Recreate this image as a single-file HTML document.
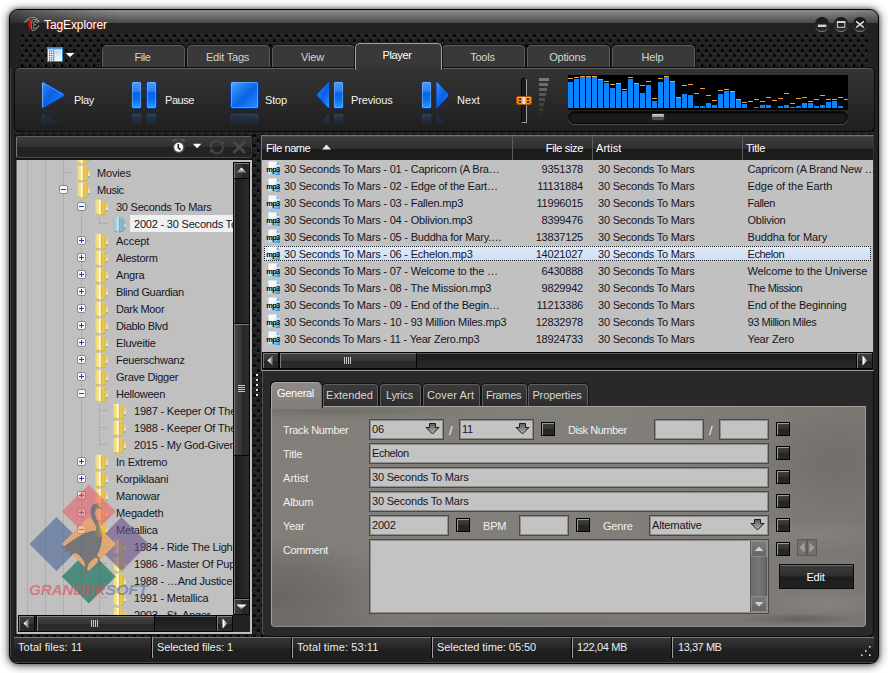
<!DOCTYPE html><html><head><meta charset="utf-8"><title>TagExplorer</title><style>
*{box-sizing:border-box;margin:0;padding:0}
html,body{width:888px;height:673px;overflow:hidden;background:#fff}
body{position:relative;font-family:"Liberation Sans","DejaVu Sans",sans-serif;font-size:11px;letter-spacing:-0.2px;color:#e6e6e6}
.a{position:absolute}
.t{position:absolute;white-space:nowrap;line-height:13px;height:13px}
.win{left:9px;top:9px;width:870px;height:655px;border-radius:9px;background:#000;box-shadow:0 1px 10px 1px rgba(0,0,0,.55),0 0 4px rgba(0,0,0,.45)}
.winin{left:1px;top:1px;right:1px;bottom:1px;border-radius:8px;background-color:#222;overflow:hidden;
 background-image:radial-gradient(circle at 2.3px 1.6px,#000 0,#000 1px,rgba(0,0,0,0) 1.8px),radial-gradient(circle at 6.3px 6.6px,#000 0,#000 1px,rgba(0,0,0,0) 1.8px),radial-gradient(circle at 2.3px 4px,rgba(255,255,255,.08) 0,rgba(255,255,255,.08) .5px,rgba(255,255,255,0) 1.3px),radial-gradient(circle at 6.3px 9px,rgba(255,255,255,.08) 0,rgba(255,255,255,.08) .5px,rgba(255,255,255,0) 1.3px);background-size:8px 10px;background-position:2px 4px}
.dk{color:#15151f}
.tab{position:absolute;top:35px;height:24px;width:83px;border:1px solid #5c5c5c;border-bottom:none;border-radius:5px 5px 0 0;background:#393939;text-align:center;line-height:22px;color:#d6d6d0;box-shadow:0 0 0 1px #111;padding-right:2px}
.tab.sel{top:33px;height:27px;width:87px;background:linear-gradient(#393939 0,#383838 80%,#313131 100%);border-color:#a4a49e;color:#fff;line-height:22px;z-index:3;box-shadow:-1px 0 0 #111,1px 0 0 #111;padding-right:3px}
.tbl{font-size:11px;color:#f2f2f2}
.hdr{position:absolute;top:126px;height:24px;background:linear-gradient(#3d3d3d 0,#2e2e2e 54%,#1b1b1b 54%,#1e1e1e 100%);border-left:1px solid #5c5c5c;border-top:1px solid #4a4a4a;line-height:23px;color:#fff;padding-left:3px;white-space:nowrap}
.row{position:absolute;left:253px;width:609px;height:17px;line-height:17px;color:#15151f;white-space:nowrap}
.row>span{position:absolute;top:1px}
.fld{position:absolute;height:21px;border:1px solid #4c4a48;background:#c3c3c3;box-shadow:inset 0 0 0 1px #908e8b;color:#15151f;line-height:19px;padding-left:2px;white-space:nowrap}
.lbl{position:absolute;color:#f0f0f0;white-space:nowrap;line-height:13px}
.cb{position:absolute;width:14px;height:14px;border:1px solid #000;background:linear-gradient(#3e3e3e 0,#343434 50%,#262626 50%,#282828 100%);box-shadow:inset 1px 1px 0 #9c9c9c}
.tt{position:absolute;letter-spacing:0;padding-right:2px;top:374px;height:22px;border:1px solid #5e5e5e;border-bottom:none;border-radius:4px 4px 0 0;background:linear-gradient(#3b3b3b,#2c2c2c);color:#d8d8d8;text-align:center;line-height:21px;box-shadow:0 0 0 1px #111;white-space:nowrap}
.sb{position:absolute;color:#ececec;line-height:13px;white-space:nowrap;top:631px}
.sd{position:absolute;top:627px;width:2px;height:21px;background:linear-gradient(90deg,#050505 50%,#9c9c9c 50%)}
.tr{position:absolute;left:0;height:17px;line-height:17px;color:#15151f;white-space:nowrap}
</style></head><body>
<div class="a win"><div class="a winin">
<div class="a" style="left:0px;top:0px;width:868px;height:23px;background:linear-gradient(90deg,rgba(20,20,20,.55) 0,rgba(20,20,20,.35) 30px,rgba(20,20,20,0) 110px,rgba(20,20,20,0) 820px,rgba(20,20,20,.12) 868px),linear-gradient(#8e8e8e 0,#4a4a4a 13px,#212121 13px,#212121 100%)"></div>
<div class="a" style="left:0px;top:13px;width:868px;height:10px;background:#212121"></div>
<div class="a" style="left:0px;top:23px;width:5px;height:640px;background:linear-gradient(90deg,#474747 0,#474747 1px,#222 1px)"></div>
<div class="a" style="left:864px;top:23px;width:5px;height:640px;background:#212121"></div>
<div class="a" style="left:858px;top:23px;width:6px;height:35px;background:#222"></div>
<div class="a" style="left:0px;top:23px;width:9px;height:35px;background:#222"></div>
<svg class="a" style="left:13px;top:5px" width="18" height="18" viewBox="23 15 18 18"><path d="M24.800 22.300 C27 17.500 35.500 14.500 39.200 21.800 C35.500 17.800 29.500 18 24.800 22.300Z" fill="#050505" stroke="#c8c8c8" stroke-width=".7"/><path d="M31 18.500 C27.500 21 27.500 28.500 31.500 31 C30 27.500 30.500 22 33 19Z" fill="#ee1212" stroke="#600" stroke-width=".4"/><path d="M33 19.300 C31 22 30.800 27.500 32.300 30.800 C35 30.500 37.500 28.500 39 25.500 C37 27.800 35 28.800 33.600 28.800 L33.300 25.500 L36 24.500 L33.300 24 L33.800 21.300 C35 21.200 36.500 21.800 37.500 23 C36.800 20.800 35 19.300 33 19.300Z" fill="#1a1a1a" stroke="#bdbdbd" stroke-width=".6"/></svg>
<div class="t " style="left:34px;top:7px;font-size:12px;line-height:16px;height:16px;color:#fff;letter-spacing:-0.1px;text-shadow:0 0 3px rgba(200,40,20,.9)">TagExplorer</div>
<svg class="a" style="left:804px;top:6px" width="16" height="17" viewBox="0 0 16 17"><defs><linearGradient id="wb0" x1="0" y1="0" x2="0" y2="1"><stop offset="0" stop-color="#181818"/><stop offset="1" stop-color="#2a2a2a"/></linearGradient><linearGradient id="wr0" x1="0" y1="0" x2="0" y2="1"><stop offset="0" stop-color="#000" stop-opacity="0"/><stop offset=".55" stop-color="#333" stop-opacity=".3"/><stop offset="1" stop-color="#8a8a8a"/></linearGradient></defs><circle cx="8" cy="8.300" r="7.600" fill="url(#wr0)"/><circle cx="8" cy="8" r="7.100" fill="url(#wb0)"/><rect x="3.900" y="8.600" width="8.400" height="2.400" fill="#d4d4d4"/></svg>
<svg class="a" style="left:823px;top:6px" width="16" height="17" viewBox="0 0 16 17"><defs><linearGradient id="wb1" x1="0" y1="0" x2="0" y2="1"><stop offset="0" stop-color="#181818"/><stop offset="1" stop-color="#2a2a2a"/></linearGradient><linearGradient id="wr1" x1="0" y1="0" x2="0" y2="1"><stop offset="0" stop-color="#000" stop-opacity="0"/><stop offset=".55" stop-color="#333" stop-opacity=".3"/><stop offset="1" stop-color="#8a8a8a"/></linearGradient></defs><circle cx="8" cy="8.300" r="7.600" fill="url(#wr1)"/><circle cx="8" cy="8" r="7.100" fill="url(#wb1)"/><rect x="4.400" y="5.500" width="7.400" height="5.800" fill="none" stroke="#d4d4d4" stroke-width="1"/><rect x="3.900" y="5" width="8.400" height="2" fill="#d4d4d4"/></svg>
<svg class="a" style="left:842px;top:6px" width="16" height="17" viewBox="0 0 16 17"><defs><linearGradient id="wb2" x1="0" y1="0" x2="0" y2="1"><stop offset="0" stop-color="#181818"/><stop offset="1" stop-color="#2a2a2a"/></linearGradient><linearGradient id="wr2" x1="0" y1="0" x2="0" y2="1"><stop offset="0" stop-color="#000" stop-opacity="0"/><stop offset=".55" stop-color="#333" stop-opacity=".3"/><stop offset="1" stop-color="#8a8a8a"/></linearGradient></defs><circle cx="8" cy="8.300" r="7.600" fill="url(#wr2)"/><circle cx="8" cy="8" r="7.100" fill="url(#wb2)"/><path d="M4.200 5.300 L11.800 11.500 M11.800 5.300 L4.200 11.500" stroke="#e4e4e4" stroke-width="1.500"/></svg>
<svg class="a" style="left:37px;top:37px" width="30" height="16" viewBox="0 0 30 16"><defs><linearGradient id="mi" x1="0" y1="0" x2="0" y2="1"><stop offset="0" stop-color="#d0d4da"/><stop offset="1" stop-color="#fafbfd"/></linearGradient></defs><rect x=".5" y=".5" width="15" height="14" fill="#fbfcfe" stroke="#2b8ad6"/><rect x="1" y="1" width="14" height="1.500" fill="#4aa0e6"/><rect x="6.300" y="2.500" width="1" height="11.500" fill="#2b8ad6"/><rect x="8" y="3.500" width="6.500" height="10" fill="url(#mi)"/><rect x="2" y="3.5" width="1.300" height="1.300" fill="#1c50c0"/><rect x="4" y="3.5" width="1.500" height="1.300" fill="#777"/><rect x="2" y="5.7" width="1.300" height="1.300" fill="#1c50c0"/><rect x="4" y="5.7" width="1.500" height="1.300" fill="#777"/><rect x="2" y="7.9" width="1.300" height="1.300" fill="#1c50c0"/><rect x="4" y="7.9" width="1.500" height="1.300" fill="#777"/><rect x="2" y="10.1" width="1.300" height="1.300" fill="#1c50c0"/><rect x="4" y="10.1" width="1.500" height="1.300" fill="#777"/><rect x="2" y="12.3" width="1.300" height="1.300" fill="#1c50c0"/><rect x="4" y="12.3" width="1.500" height="1.300" fill="#777"/><path d="M18.800 6 L27.300 6 L23 10.200Z" fill="#fff"/></svg>
<div class="tab" style="left:92px"><span style="letter-spacing:-0.45px">File</span></div>
<div class="tab" style="left:177px">Edit Tags</div>
<div class="tab" style="left:262px">View</div>
<div class="tab sel" style="left:345px"><span style="letter-spacing:-0.36px">Player</span></div>
<div class="tab" style="left:432px">Tools</div>
<div class="tab" style="left:517px">Options</div>
<div class="tab" style="left:602px">Help</div>
<div class="a" style="left:4px;top:57px;width:861px;height:65px;border-radius:6px;background:#0a0a0a"></div>
<div class="a" style="left:5px;top:58px;width:859px;height:63px;border-radius:5px;background:linear-gradient(#343434 0,#2c2c2c 40%,#1f1f1f 100%);border-top:1px solid #5e5e5e"></div>
<svg class="a" style="left:31px;top:71px" width="440" height="47" viewBox="0 0 440 47"><defs>
<linearGradient id="gl" x1="0" y1="0" x2="0" y2="1"><stop offset="0" stop-color="#4f9ff6"/><stop offset=".36" stop-color="#2a80f2"/><stop offset=".42" stop-color="#0b62e4"/><stop offset=".7" stop-color="#0f70ee"/><stop offset="1" stop-color="#33a0ff"/></linearGradient>
<linearGradient id="tri" x1="0" y1="0" x2="1" y2="1"><stop offset="0" stop-color="#4a9ef8"/><stop offset=".3" stop-color="#1a74ee"/><stop offset=".55" stop-color="#0b60e2"/><stop offset="1" stop-color="#2f96ff"/></linearGradient>
<linearGradient id="trr" x1="0" y1="0" x2="1" y2=".8"><stop offset="0" stop-color="#4a9ef8"/><stop offset=".22" stop-color="#1c76ee"/><stop offset=".5" stop-color="#0b60e2"/><stop offset=".8" stop-color="#1878f0"/><stop offset="1" stop-color="#349cff"/></linearGradient>
<linearGradient id="sq" x1="0" y1="0" x2="1" y2="1"><stop offset="0" stop-color="#56acff"/><stop offset=".3" stop-color="#2380f2"/><stop offset=".55" stop-color="#0b64e6"/><stop offset="1" stop-color="#2a90ff"/></linearGradient>
<linearGradient id="fade" x1="0" y1="0" x2="0" y2="1"><stop offset="0" stop-color="#fff" stop-opacity=".27"/><stop offset="1" stop-color="#fff" stop-opacity="0"/></linearGradient>
<mask id="mk"><rect x="0" y="32" width="440" height="13" fill="url(#fade)"/></mask>
</defs><g id="ic"><path d="M2.500 1 Q.5 0 .5 2.500 L.5 25.500 Q.5 28 2.500 27 L22.800 15.300 Q24.200 14 22.800 12.700Z" fill="url(#trr)" stroke="#07349c"/><path d="M2.500 2.300 Q1.600 1.800 1.600 3 L1.600 25 Q1.600 26.200 2.500 25.700" fill="none" stroke="#9cd0ff" stroke-opacity=".6"/><path d="M2.500 2.200 L21.500 13" fill="none" stroke="#9cd0ff" stroke-opacity=".45"/><rect x="90.5" y=".5" width="10" height="27" rx="2" fill="url(#gl)" stroke="#07349c"/><rect x="91.5" y="1.5" width="8" height="25" rx="1.5" fill="none" stroke="#8cc8ff" stroke-opacity=".45"/><rect x="105.5" y=".5" width="10" height="27" rx="2" fill="url(#gl)" stroke="#07349c"/><rect x="106.5" y="1.5" width="8" height="25" rx="1.5" fill="none" stroke="#8cc8ff" stroke-opacity=".45"/><rect x="189.500" y=".5" width="28" height="27" rx="2" fill="url(#sq)" stroke="#07349c"/><rect x="190.500" y="1.500" width="26" height="25" rx="1.500" fill="none" stroke="#8cc8ff" stroke-opacity=".5"/><path d="M287 1 Q288.500 0 288.500 2.500 L288.500 25.500 Q288.500 28 287 27 L276.200 15.300 Q275 14 276.200 12.700Z" fill="url(#tri)" stroke="#07349c"/><rect x="292.5" y=".5" width="10" height="27" rx="2" fill="url(#gl)" stroke="#07349c"/><rect x="293.5" y="1.5" width="8" height="25" rx="1.5" fill="none" stroke="#8cc8ff" stroke-opacity=".45"/><rect x="380.5" y=".5" width="10" height="27" rx="2" fill="url(#gl)" stroke="#07349c"/><rect x="381.5" y="1.5" width="8" height="25" rx="1.5" fill="none" stroke="#8cc8ff" stroke-opacity=".45"/><path d="M396.500 1 Q395 0 395 2.500 L395 25.500 Q395 28 396.500 27 L407.300 15.300 Q408.500 14 407.300 12.700Z" fill="url(#tri)" stroke="#07349c"/></g><g mask="url(#mk)"><g transform="translate(0,60) scale(1,-1)"><path d="M2.500 1 Q.5 0 .5 2.500 L.5 25.500 Q.5 28 2.500 27 L22.800 15.300 Q24.200 14 22.800 12.700Z" fill="url(#trr)" stroke="#07349c"/><path d="M2.500 2.300 Q1.600 1.800 1.600 3 L1.600 25 Q1.600 26.200 2.500 25.700" fill="none" stroke="#9cd0ff" stroke-opacity=".6"/><path d="M2.500 2.200 L21.500 13" fill="none" stroke="#9cd0ff" stroke-opacity=".45"/><rect x="90.5" y=".5" width="10" height="27" rx="2" fill="url(#gl)" stroke="#07349c"/><rect x="91.5" y="1.5" width="8" height="25" rx="1.5" fill="none" stroke="#8cc8ff" stroke-opacity=".45"/><rect x="105.5" y=".5" width="10" height="27" rx="2" fill="url(#gl)" stroke="#07349c"/><rect x="106.5" y="1.5" width="8" height="25" rx="1.5" fill="none" stroke="#8cc8ff" stroke-opacity=".45"/><rect x="189.500" y=".5" width="28" height="27" rx="2" fill="url(#sq)" stroke="#07349c"/><rect x="190.500" y="1.500" width="26" height="25" rx="1.500" fill="none" stroke="#8cc8ff" stroke-opacity=".5"/><path d="M287 1 Q288.500 0 288.500 2.500 L288.500 25.500 Q288.500 28 287 27 L276.200 15.300 Q275 14 276.200 12.700Z" fill="url(#tri)" stroke="#07349c"/><rect x="292.5" y=".5" width="10" height="27" rx="2" fill="url(#gl)" stroke="#07349c"/><rect x="293.5" y="1.5" width="8" height="25" rx="1.5" fill="none" stroke="#8cc8ff" stroke-opacity=".45"/><rect x="380.5" y=".5" width="10" height="27" rx="2" fill="url(#gl)" stroke="#07349c"/><rect x="381.5" y="1.5" width="8" height="25" rx="1.5" fill="none" stroke="#8cc8ff" stroke-opacity=".45"/><path d="M396.500 1 Q395 0 395 2.500 L395 25.500 Q395 28 396.500 27 L407.300 15.300 Q408.500 14 407.300 12.700Z" fill="url(#tri)" stroke="#07349c"/></g></g></svg>
<div class="t tbl" style="left:64px;top:84px;"><span style="letter-spacing:-0.38px">Play</span></div>
<div class="t tbl" style="left:155px;top:84px;"><span style="letter-spacing:-0.44px">Pause</span></div>
<div class="t tbl" style="left:255px;top:84px;"><span style="letter-spacing:-0.21px">Stop</span></div>
<div class="t tbl" style="left:341px;top:84px;"><span style="letter-spacing:-0.16px">Previous</span></div>
<div class="t tbl" style="left:447px;top:84px;"><span style="letter-spacing:0.09px">Next</span></div>
<div class="a" style="left:511px;top:68px;width:6px;height:45px;border-radius:3px 3px 1px 1px;background:#1b1b1b;border:1px solid #080808;border-right-color:#9c9c9c;border-bottom-color:#9c9c9c"></div>
<div class="a" style="left:506px;top:86px;width:16px;height:9px;border-radius:2px;background:linear-gradient(90deg,#e87808 0,#f89020 30%,#f08010 36%,#b8b8b8 38%,#f6f6f6 50%,#a8a8a8 62%,#f08010 64%,#f89020 70%,#e87808 100%);border:1px solid #a85400;box-shadow:inset 0 1px 0 rgba(255,200,120,.7)"><div class="a" style="left:2px;top:1px;width:2px;height:2px;background:#5a2c00"></div><div class="a" style="left:2px;top:4px;width:2px;height:2px;background:#5a2c00"></div><div class="a" style="left:10px;top:1px;width:2px;height:2px;background:#5a2c00"></div><div class="a" style="left:10px;top:4px;width:2px;height:2px;background:#5a2c00"></div></div>
<div class="a" style="left:529px;top:68px;width:10px;height:3px;background:rgb(120,120,120)"></div>
<div class="a" style="left:529px;top:73px;width:9px;height:3px;background:rgb(109,109,109)"></div>
<div class="a" style="left:529px;top:78px;width:8px;height:3px;background:rgb(99,99,99)"></div>
<div class="a" style="left:529px;top:83px;width:7px;height:3px;background:rgb(88,88,88)"></div>
<div class="a" style="left:529px;top:88px;width:6px;height:3px;background:rgb(78,78,78)"></div>
<div class="a" style="left:529px;top:93px;width:5px;height:3px;background:rgb(67,67,67)"></div>
<div class="a" style="left:529px;top:98px;width:4px;height:3px;background:rgb(57,57,57)"></div>
<div class="a" style="left:529px;top:103px;width:3px;height:3px;background:rgb(46,46,46)"></div>
<div class="a" style="left:529px;top:108px;width:2px;height:3px;background:rgb(36,36,36)"></div>
<svg class="a" style="left:558px;top:65px" width="280" height="35" viewBox="0 0 280 35"><rect width="280" height="35" fill="#000"/><rect x="0" y="7" width="5" height="26" fill="#0a84ff"/><rect x="0" y="3" width="5" height="1" fill="#f0a040"/><rect x="6" y="4" width="5" height="29" fill="#0a84ff"/><rect x="6" y="2" width="5" height="1" fill="#f0a040"/><rect x="12" y="2" width="5" height="31" fill="#0a84ff"/><rect x="12" y="1" width="5" height="1" fill="#f0a040"/><rect x="18" y="2" width="5" height="31" fill="#0a84ff"/><rect x="18" y="1" width="5" height="1" fill="#f0a040"/><rect x="24" y="2" width="5" height="31" fill="#0a84ff"/><rect x="24" y="1" width="5" height="1" fill="#f0a040"/><rect x="30" y="5" width="5" height="28" fill="#0a84ff"/><rect x="30" y="4" width="5" height="1" fill="#f0a040"/><rect x="36" y="8" width="5" height="25" fill="#0a84ff"/><rect x="36" y="6" width="5" height="1" fill="#f0a040"/><rect x="42" y="13" width="5" height="20" fill="#0a84ff"/><rect x="42" y="9" width="5" height="1" fill="#f0a040"/><rect x="48" y="9" width="5" height="24" fill="#0a84ff"/><rect x="48" y="8" width="5" height="1" fill="#f0a040"/><rect x="54" y="16" width="5" height="17" fill="#0a84ff"/><rect x="54" y="14" width="5" height="1" fill="#f0a040"/><rect x="60" y="4" width="5" height="29" fill="#0a84ff"/><rect x="60" y="2" width="5" height="1" fill="#f0a040"/><rect x="66" y="9" width="5" height="24" fill="#0a84ff"/><rect x="66" y="8" width="5" height="1" fill="#f0a040"/><rect x="72" y="18" width="5" height="15" fill="#0a84ff"/><rect x="72" y="10" width="5" height="1" fill="#f0a040"/><rect x="78" y="10" width="5" height="23" fill="#0a84ff"/><rect x="78" y="6" width="5" height="1" fill="#f0a040"/><rect x="84" y="26" width="5" height="7" fill="#0a84ff"/><rect x="84" y="23" width="5" height="1" fill="#f0a040"/><rect x="90" y="7" width="5" height="26" fill="#0a84ff"/><rect x="90" y="3" width="5" height="1" fill="#f0a040"/><rect x="96" y="2" width="5" height="31" fill="#0a84ff"/><rect x="96" y="1" width="5" height="1" fill="#f0a040"/><rect x="102" y="7" width="5" height="26" fill="#0a84ff"/><rect x="102" y="6" width="5" height="1" fill="#f0a040"/><rect x="108" y="23" width="5" height="10" fill="#0a84ff"/><rect x="108" y="22" width="5" height="1" fill="#f0a040"/><rect x="114" y="19" width="5" height="14" fill="#0a84ff"/><rect x="114" y="10" width="5" height="1" fill="#f0a040"/><rect x="120" y="20" width="5" height="13" fill="#0a84ff"/><rect x="120" y="9" width="5" height="1" fill="#f0a040"/><rect x="126" y="31" width="5" height="2" fill="#0a84ff"/><rect x="126" y="18" width="5" height="1" fill="#f0a040"/><rect x="132" y="31" width="5" height="2" fill="#0a84ff"/><rect x="132" y="13" width="5" height="1" fill="#f0a040"/><rect x="138" y="28" width="5" height="5" fill="#0a84ff"/><rect x="138" y="20" width="5" height="1" fill="#f0a040"/><rect x="144" y="30" width="5" height="3" fill="#0a84ff"/><rect x="144" y="25" width="5" height="1" fill="#f0a040"/><rect x="150" y="19" width="5" height="14" fill="#0a84ff"/><rect x="150" y="15" width="5" height="1" fill="#f0a040"/><rect x="156" y="16" width="5" height="17" fill="#0a84ff"/><rect x="156" y="14" width="5" height="1" fill="#f0a040"/><rect x="162" y="17" width="5" height="16" fill="#0a84ff"/><rect x="162" y="16" width="5" height="1" fill="#f0a040"/><rect x="168" y="25" width="5" height="8" fill="#0a84ff"/><rect x="168" y="24" width="5" height="1" fill="#f0a040"/><rect x="174" y="29" width="5" height="4" fill="#0a84ff"/><rect x="174" y="27" width="5" height="1" fill="#f0a040"/><rect x="180" y="26" width="5" height="1" fill="#f0a040"/><rect x="186" y="32" width="5" height="1" fill="#0a84ff"/><rect x="186" y="24" width="5" height="1" fill="#f0a040"/><rect x="192" y="30" width="5" height="3" fill="#0a84ff"/><rect x="192" y="26" width="5" height="1" fill="#f0a040"/><rect x="198" y="30" width="5" height="3" fill="#0a84ff"/><rect x="198" y="22" width="5" height="1" fill="#f0a040"/><rect x="204" y="25" width="5" height="1" fill="#f0a040"/><rect x="210" y="31" width="5" height="2" fill="#0a84ff"/><rect x="210" y="23" width="5" height="1" fill="#f0a040"/><rect x="216" y="30" width="5" height="3" fill="#0a84ff"/><rect x="216" y="18" width="5" height="1" fill="#f0a040"/><rect x="222" y="32" width="5" height="1" fill="#0a84ff"/><rect x="222" y="28" width="5" height="1" fill="#f0a040"/><rect x="228" y="31" width="5" height="2" fill="#0a84ff"/><rect x="228" y="23" width="5" height="1" fill="#f0a040"/><rect x="234" y="28" width="5" height="5" fill="#0a84ff"/><rect x="234" y="22" width="5" height="1" fill="#f0a040"/><rect x="240" y="28" width="5" height="5" fill="#0a84ff"/><rect x="240" y="26" width="5" height="1" fill="#f0a040"/><rect x="246" y="31" width="5" height="2" fill="#0a84ff"/><rect x="246" y="24" width="5" height="1" fill="#f0a040"/><rect x="252" y="30" width="5" height="3" fill="#0a84ff"/><rect x="252" y="20" width="5" height="1" fill="#f0a040"/><rect x="258" y="27" width="5" height="6" fill="#0a84ff"/><rect x="258" y="24" width="5" height="1" fill="#f0a040"/><rect x="264" y="26" width="5" height="7" fill="#0a84ff"/><rect x="264" y="24" width="5" height="1" fill="#f0a040"/><rect x="270" y="31" width="5" height="2" fill="#0a84ff"/><rect x="270" y="22" width="5" height="1" fill="#f0a040"/><rect x="276" y="24" width="5" height="1" fill="#f0a040"/></svg>
<div class="a" style="left:558px;top:101px;width:280px;height:13px;border-radius:7px;background:#1b1b1b;border:1px solid #0a0a0a;box-shadow:0 1px 0 #4a4a4a, inset 0 1px 2px #000"></div>
<div class="a" style="left:641px;top:103px;width:14px;height:8px;border-radius:2px;background:linear-gradient(#d8d8d8 0,#9a9a9a 45%,#4a4a4a 55%,#555 100%);border:1px solid #222"></div>
<div class="a" style="left:5px;top:125px;width:238px;height:500px;background:#161616;border-radius:2px"></div>
<div class="a" style="left:6px;top:126px;width:236px;height:22px;background:linear-gradient(#3c3c3c 0,#303030 48%,#222 50%,#242424 100%);border:1px solid #3c3c3c;border-top-color:#5e5e5e;border-left-color:#7a7a7a;border-bottom-color:#4a4a4a;border-radius:2px"></div>
<svg class="a" style="left:160px;top:127px" width="82" height="20" viewBox="0 0 82 20"><path d="M3.300 5.200 A2.300 2.300 0 0 1 6.800 3 M14.200 5.200 A2.300 2.300 0 0 0 10.700 3" stroke="#5a5a5a" stroke-width="1.700" fill="none"/><circle cx="8.700" cy="10.300" r="5.300" fill="#fbfbfb" stroke="#4c4c4c" stroke-width="1.500"/><path d="M8.300 7 V10.800 L10.600 12.600" stroke="#1a1a1a" stroke-width="1.500" fill="none"/><path d="M22.800 6.800 L31.400 6.800 L27.100 11.300Z" fill="#fff"/><path d="M41.200 11.300 A5.900 5.900 0 0 1 51.600 6.200 M52.600 8.700 A5.900 5.900 0 0 1 42.200 13.800" fill="none" stroke="#464646" stroke-width="2"/><path d="M49.300 7.400 L54 8 L53.800 3.300Z M44.500 12.600 L39.800 12 L40 16.700Z" fill="#464646"/><path d="M63.400 4.200 L75.200 16 M75.200 4.200 L63.400 16" stroke="#474747" stroke-width="3"/></svg>
<div class="a" style="left:6px;top:150px;width:236px;height:474px;background:#c0c0c0;border-left:1px solid #6a6a6a"></div>
<div class="a" style="left:7px;top:150px;width:216px;height:455px;background:#c0c0c0;overflow:hidden"><svg width="0" height="0" class="a"><defs><linearGradient id="fgy" x1="0" y1="0" x2="1" y2="0"><stop offset="0" stop-color="#f0d874"/><stop offset=".55" stop-color="#f5e38e"/><stop offset=".7" stop-color="#fffadc"/><stop offset=".85" stop-color="#fffadc"/><stop offset="1" stop-color="#f2dc80"/></linearGradient><linearGradient id="fry" x1="0" y1="0" x2="1" y2="0"><stop offset="0" stop-color="#efd060"/><stop offset="1" stop-color="#e3bb40"/></linearGradient><linearGradient id="fty" x1="0" y1="0" x2="1" y2="0"><stop offset="0" stop-color="#e8c858"/><stop offset="1" stop-color="#f0d878"/></linearGradient><linearGradient id="fsy" x1="0" y1="0" x2="1" y2="0"><stop offset="0" stop-color="#c8a23a"/><stop offset="1" stop-color="#c8a23a"/></linearGradient><linearGradient id="fgb" x1="0" y1="0" x2="1" y2="0"><stop offset="0" stop-color="#98c2d2"/><stop offset=".5" stop-color="#a8cedc"/><stop offset=".78" stop-color="#d4eaf2"/><stop offset="1" stop-color="#a6ccda"/></linearGradient><linearGradient id="frb" x1="0" y1="0" x2="1" y2="0"><stop offset="0" stop-color="#94c0d0"/><stop offset="1" stop-color="#7eaec0"/></linearGradient><linearGradient id="ftb" x1="0" y1="0" x2="1" y2="0"><stop offset="0" stop-color="#86b4c6"/><stop offset="1" stop-color="#9cc6d6"/></linearGradient><linearGradient id="fsb" x1="0" y1="0" x2="1" y2="0"><stop offset="0" stop-color="#6c9cb0"/><stop offset="1" stop-color="#6c9cb0"/></linearGradient></defs></svg>
<div class="a" style="left:10px;top:0px;width:1px;height:455px;background:repeating-linear-gradient(#9c9c9c 0,#9c9c9c 1px,transparent 1px,transparent 2px)"></div>
<div class="a" style="left:28px;top:0px;width:1px;height:455px;background:repeating-linear-gradient(#9c9c9c 0,#9c9c9c 1px,transparent 1px,transparent 2px)"></div>
<div class="a" style="left:46px;top:0px;width:1px;height:455px;background:repeating-linear-gradient(#9c9c9c 0,#9c9c9c 1px,transparent 1px,transparent 2px)"></div>
<svg class="a" style="left:60px;top:-12px" width="14" height="17" viewBox="0 0 14 17"><path d="M10.400 4.600 L12.800 5.200 L12.800 13.800 L10.400 14.400Z" fill="url(#fty)"/><rect x="11.400" y="8.400" width="1" height="2.600" fill="#fff"/><rect x="11.400" y="11" width="1" height="2.300" fill="#36a2ea"/><path d="M5.500 1.600 L9.300 1.700 Q10.700 1.900 10.700 3.400 L10.700 15 Q10.700 15.900 9.800 16 L5.500 16.300Z" fill="url(#fry)"/><path d="M.4 1.500 Q.4 .7 1.200 .7 L5.300 .8 Q6.200 .8 6.200 1.800 L6.200 15.800 Q6.200 16.600 5.300 16.500 L1.200 15.700 Q.4 15.500 .4 14.800Z" fill="url(#fgy)"/><rect x="5.900" y="1.500" width=".6" height="14.800" fill="url(#fsy)"/><path d="M.6 14.600 L6 15.500 L6 16.500 L1.200 15.700Z M6.500 15.400 L10.600 15 L10.600 15.400 Q10.500 16 9.800 16 L6.500 16.300Z" fill="url(#fsy)" fill-opacity=".7"/></svg>
<div class="a" style="left:64px;top:38px;width:1px;height:417px;background:repeating-linear-gradient(#9c9c9c 0,#9c9c9c 1px,transparent 1px,transparent 2px)"></div>
<div class="a" style="left:82px;top:55px;width:1px;height:9px;background:repeating-linear-gradient(#9c9c9c 0,#9c9c9c 1px,transparent 1px,transparent 2px)"></div>
<div class="a" style="left:82px;top:242px;width:1px;height:43px;background:repeating-linear-gradient(#9c9c9c 0,#9c9c9c 1px,transparent 1px,transparent 2px)"></div>
<div class="a" style="left:82px;top:378px;width:1px;height:77px;background:repeating-linear-gradient(#9c9c9c 0,#9c9c9c 1px,transparent 1px,transparent 2px)"></div>
<div class="a" style="left:47px;top:12px;width:8px;height:1px;background:repeating-linear-gradient(90deg,#9c9c9c 0,#9c9c9c 1px,transparent 1px,transparent 2px)"></div>
<svg class="a" style="left:60px;top:5px" width="14" height="17" viewBox="0 0 14 17"><path d="M10.400 4.600 L12.800 5.200 L12.800 13.800 L10.400 14.400Z" fill="url(#fty)"/><rect x="11.400" y="8.400" width="1" height="2.600" fill="#fff"/><rect x="11.400" y="11" width="1" height="2.300" fill="#36a2ea"/><path d="M5.500 1.600 L9.300 1.700 Q10.700 1.900 10.700 3.400 L10.700 15 Q10.700 15.900 9.800 16 L5.500 16.300Z" fill="url(#fry)"/><path d="M.4 1.500 Q.4 .7 1.200 .7 L5.300 .8 Q6.200 .8 6.200 1.800 L6.200 15.800 Q6.200 16.600 5.300 16.500 L1.200 15.700 Q.4 15.500 .4 14.800Z" fill="url(#fgy)"/><rect x="5.900" y="1.500" width=".6" height="14.800" fill="url(#fsy)"/><path d="M.6 14.600 L6 15.500 L6 16.500 L1.200 15.700Z M6.500 15.400 L10.600 15 L10.600 15.400 Q10.500 16 9.800 16 L6.500 16.300Z" fill="url(#fsy)" fill-opacity=".7"/></svg>
<div class="tr" style="left:80px;top:5px"><span style="letter-spacing:-0.19px">Movies</span></div>
<div class="a" style="left:52px;top:29px;width:3px;height:1px;background:repeating-linear-gradient(90deg,#9c9c9c 0,#9c9c9c 1px,transparent 1px,transparent 2px)"></div>
<svg class="a" style="left:42px;top:25px" width="9" height="9" viewBox="0 0 9 9"><rect x=".5" y=".5" width="8" height="8" rx="1.5" fill="#f6f6f6" stroke="#8a8a8a"/><rect x="2" y="4" width="5" height="1" fill="#23409a"/></svg>
<svg class="a" style="left:60px;top:22px" width="14" height="17" viewBox="0 0 14 17"><path d="M10.400 4.600 L12.800 5.200 L12.800 13.800 L10.400 14.400Z" fill="url(#fty)"/><rect x="11.400" y="8.400" width="1" height="2.600" fill="#fff"/><rect x="11.400" y="11" width="1" height="2.300" fill="#36a2ea"/><path d="M5.500 1.600 L9.300 1.700 Q10.700 1.900 10.700 3.400 L10.700 15 Q10.700 15.900 9.800 16 L5.500 16.300Z" fill="url(#fry)"/><path d="M.4 1.500 Q.4 .7 1.200 .7 L5.300 .8 Q6.200 .8 6.200 1.800 L6.200 15.800 Q6.200 16.600 5.300 16.500 L1.200 15.700 Q.4 15.500 .4 14.800Z" fill="url(#fgy)"/><rect x="5.900" y="1.500" width=".6" height="14.800" fill="url(#fsy)"/><path d="M.6 14.600 L6 15.500 L6 16.500 L1.200 15.700Z M6.500 15.400 L10.600 15 L10.600 15.400 Q10.500 16 9.800 16 L6.500 16.300Z" fill="url(#fsy)" fill-opacity=".7"/></svg>
<div class="tr" style="left:80px;top:22px"><span style="letter-spacing:-0.45px">Music</span></div>
<div class="a" style="left:70px;top:46px;width:3px;height:1px;background:repeating-linear-gradient(90deg,#9c9c9c 0,#9c9c9c 1px,transparent 1px,transparent 2px)"></div>
<svg class="a" style="left:60px;top:42px" width="9" height="9" viewBox="0 0 9 9"><rect x=".5" y=".5" width="8" height="8" rx="1.5" fill="#f6f6f6" stroke="#8a8a8a"/><rect x="2" y="4" width="5" height="1" fill="#23409a"/></svg>
<svg class="a" style="left:78px;top:39px" width="14" height="17" viewBox="0 0 14 17"><path d="M10.400 4.600 L12.800 5.200 L12.800 13.800 L10.400 14.400Z" fill="url(#fty)"/><rect x="11.400" y="8.400" width="1" height="2.600" fill="#fff"/><rect x="11.400" y="11" width="1" height="2.300" fill="#36a2ea"/><path d="M5.500 1.600 L9.300 1.700 Q10.700 1.900 10.700 3.400 L10.700 15 Q10.700 15.900 9.800 16 L5.500 16.300Z" fill="url(#fry)"/><path d="M.4 1.500 Q.4 .7 1.200 .7 L5.300 .8 Q6.200 .8 6.200 1.800 L6.200 15.800 Q6.200 16.600 5.300 16.500 L1.200 15.700 Q.4 15.500 .4 14.800Z" fill="url(#fgy)"/><rect x="5.900" y="1.500" width=".6" height="14.800" fill="url(#fsy)"/><path d="M.6 14.600 L6 15.500 L6 16.500 L1.200 15.700Z M6.500 15.400 L10.600 15 L10.600 15.400 Q10.500 16 9.800 16 L6.500 16.300Z" fill="url(#fsy)" fill-opacity=".7"/></svg>
<div class="tr" style="left:99px;top:39px"><span style="letter-spacing:-0.25px">30 Seconds To Mars</span></div>
<div class="a" style="left:83px;top:63px;width:8px;height:1px;background:repeating-linear-gradient(90deg,#9c9c9c 0,#9c9c9c 1px,transparent 1px,transparent 2px)"></div>
<svg class="a" style="left:96px;top:56px" width="14" height="17" viewBox="0 0 14 17"><path d="M10.400 4.600 L12.800 5.200 L12.800 13.800 L10.400 14.400Z" fill="url(#ftb)"/><rect x="11.400" y="8.400" width="1" height="2.600" fill="#fff"/><rect x="11.400" y="11" width="1" height="2.300" fill="#36a2ea"/><path d="M5.500 1.600 L9.300 1.700 Q10.700 1.900 10.700 3.400 L10.700 15 Q10.700 15.900 9.800 16 L5.500 16.300Z" fill="url(#frb)"/><path d="M.4 1.500 Q.4 .7 1.200 .7 L5.300 .8 Q6.200 .8 6.200 1.800 L6.200 15.800 Q6.200 16.600 5.300 16.500 L1.200 15.700 Q.4 15.500 .4 14.800Z" fill="url(#fgb)"/><rect x="5.900" y="1.500" width=".6" height="14.800" fill="url(#fsb)"/><path d="M.6 14.600 L6 15.500 L6 16.500 L1.200 15.700Z M6.500 15.400 L10.600 15 L10.600 15.400 Q10.500 16 9.800 16 L6.500 16.300Z" fill="url(#fsb)" fill-opacity=".7"/></svg>
<div class="a" style="left:113px;top:55px;width:200px;height:17px;background:#f0f0f0"></div>
<div class="tr" style="left:117px;top:56px">2002 - 30 Seconds To Mars - 30 Seconds To Mars</div>
<div class="a" style="left:70px;top:80px;width:3px;height:1px;background:repeating-linear-gradient(90deg,#9c9c9c 0,#9c9c9c 1px,transparent 1px,transparent 2px)"></div>
<svg class="a" style="left:60px;top:76px" width="9" height="9" viewBox="0 0 9 9"><rect x=".5" y=".5" width="8" height="8" rx="1.5" fill="#f6f6f6" stroke="#8a8a8a"/><rect x="2" y="4" width="5" height="1" fill="#23409a"/><rect x="4" y="2" width="1" height="5" fill="#23409a"/></svg>
<svg class="a" style="left:78px;top:73px" width="14" height="17" viewBox="0 0 14 17"><path d="M10.400 4.600 L12.800 5.200 L12.800 13.800 L10.400 14.400Z" fill="url(#fty)"/><rect x="11.400" y="8.400" width="1" height="2.600" fill="#fff"/><rect x="11.400" y="11" width="1" height="2.300" fill="#36a2ea"/><path d="M5.500 1.600 L9.300 1.700 Q10.700 1.900 10.700 3.400 L10.700 15 Q10.700 15.900 9.800 16 L5.500 16.300Z" fill="url(#fry)"/><path d="M.4 1.500 Q.4 .7 1.200 .7 L5.300 .8 Q6.200 .8 6.200 1.800 L6.200 15.800 Q6.200 16.600 5.300 16.500 L1.200 15.700 Q.4 15.500 .4 14.800Z" fill="url(#fgy)"/><rect x="5.900" y="1.500" width=".6" height="14.800" fill="url(#fsy)"/><path d="M.6 14.600 L6 15.500 L6 16.500 L1.200 15.700Z M6.500 15.400 L10.600 15 L10.600 15.400 Q10.500 16 9.800 16 L6.500 16.300Z" fill="url(#fsy)" fill-opacity=".7"/></svg>
<div class="tr" style="left:99px;top:73px"><span style="letter-spacing:-0.06px">Accept</span></div>
<div class="a" style="left:70px;top:97px;width:3px;height:1px;background:repeating-linear-gradient(90deg,#9c9c9c 0,#9c9c9c 1px,transparent 1px,transparent 2px)"></div>
<svg class="a" style="left:60px;top:93px" width="9" height="9" viewBox="0 0 9 9"><rect x=".5" y=".5" width="8" height="8" rx="1.5" fill="#f6f6f6" stroke="#8a8a8a"/><rect x="2" y="4" width="5" height="1" fill="#23409a"/><rect x="4" y="2" width="1" height="5" fill="#23409a"/></svg>
<svg class="a" style="left:78px;top:90px" width="14" height="17" viewBox="0 0 14 17"><path d="M10.400 4.600 L12.800 5.200 L12.800 13.800 L10.400 14.400Z" fill="url(#fty)"/><rect x="11.400" y="8.400" width="1" height="2.600" fill="#fff"/><rect x="11.400" y="11" width="1" height="2.300" fill="#36a2ea"/><path d="M5.500 1.600 L9.300 1.700 Q10.700 1.900 10.700 3.400 L10.700 15 Q10.700 15.900 9.800 16 L5.500 16.300Z" fill="url(#fry)"/><path d="M.4 1.500 Q.4 .7 1.200 .7 L5.300 .8 Q6.200 .8 6.200 1.800 L6.200 15.800 Q6.200 16.600 5.300 16.500 L1.200 15.700 Q.4 15.500 .4 14.800Z" fill="url(#fgy)"/><rect x="5.900" y="1.500" width=".6" height="14.800" fill="url(#fsy)"/><path d="M.6 14.600 L6 15.500 L6 16.500 L1.200 15.700Z M6.500 15.400 L10.600 15 L10.600 15.400 Q10.500 16 9.800 16 L6.500 16.300Z" fill="url(#fsy)" fill-opacity=".7"/></svg>
<div class="tr" style="left:99px;top:90px"><span style="letter-spacing:-0.2px">Alestorm</span></div>
<div class="a" style="left:70px;top:114px;width:3px;height:1px;background:repeating-linear-gradient(90deg,#9c9c9c 0,#9c9c9c 1px,transparent 1px,transparent 2px)"></div>
<svg class="a" style="left:60px;top:110px" width="9" height="9" viewBox="0 0 9 9"><rect x=".5" y=".5" width="8" height="8" rx="1.5" fill="#f6f6f6" stroke="#8a8a8a"/><rect x="2" y="4" width="5" height="1" fill="#23409a"/><rect x="4" y="2" width="1" height="5" fill="#23409a"/></svg>
<svg class="a" style="left:78px;top:107px" width="14" height="17" viewBox="0 0 14 17"><path d="M10.400 4.600 L12.800 5.200 L12.800 13.800 L10.400 14.400Z" fill="url(#fty)"/><rect x="11.400" y="8.400" width="1" height="2.600" fill="#fff"/><rect x="11.400" y="11" width="1" height="2.300" fill="#36a2ea"/><path d="M5.500 1.600 L9.300 1.700 Q10.700 1.900 10.700 3.400 L10.700 15 Q10.700 15.900 9.800 16 L5.500 16.300Z" fill="url(#fry)"/><path d="M.4 1.500 Q.4 .7 1.200 .7 L5.300 .8 Q6.200 .8 6.200 1.800 L6.200 15.800 Q6.200 16.600 5.300 16.500 L1.200 15.700 Q.4 15.500 .4 14.800Z" fill="url(#fgy)"/><rect x="5.900" y="1.500" width=".6" height="14.800" fill="url(#fsy)"/><path d="M.6 14.600 L6 15.500 L6 16.500 L1.200 15.700Z M6.500 15.400 L10.600 15 L10.600 15.400 Q10.500 16 9.800 16 L6.500 16.300Z" fill="url(#fsy)" fill-opacity=".7"/></svg>
<div class="tr" style="left:99px;top:107px"><span style="letter-spacing:-0.17px">Angra</span></div>
<div class="a" style="left:70px;top:131px;width:3px;height:1px;background:repeating-linear-gradient(90deg,#9c9c9c 0,#9c9c9c 1px,transparent 1px,transparent 2px)"></div>
<svg class="a" style="left:60px;top:127px" width="9" height="9" viewBox="0 0 9 9"><rect x=".5" y=".5" width="8" height="8" rx="1.5" fill="#f6f6f6" stroke="#8a8a8a"/><rect x="2" y="4" width="5" height="1" fill="#23409a"/><rect x="4" y="2" width="1" height="5" fill="#23409a"/></svg>
<svg class="a" style="left:78px;top:124px" width="14" height="17" viewBox="0 0 14 17"><path d="M10.400 4.600 L12.800 5.200 L12.800 13.800 L10.400 14.400Z" fill="url(#fty)"/><rect x="11.400" y="8.400" width="1" height="2.600" fill="#fff"/><rect x="11.400" y="11" width="1" height="2.300" fill="#36a2ea"/><path d="M5.500 1.600 L9.300 1.700 Q10.700 1.900 10.700 3.400 L10.700 15 Q10.700 15.900 9.800 16 L5.500 16.300Z" fill="url(#fry)"/><path d="M.4 1.500 Q.4 .7 1.200 .7 L5.300 .8 Q6.200 .8 6.200 1.800 L6.200 15.800 Q6.200 16.600 5.300 16.500 L1.200 15.700 Q.4 15.500 .4 14.800Z" fill="url(#fgy)"/><rect x="5.900" y="1.500" width=".6" height="14.800" fill="url(#fsy)"/><path d="M.6 14.600 L6 15.500 L6 16.500 L1.200 15.700Z M6.500 15.400 L10.600 15 L10.600 15.400 Q10.500 16 9.800 16 L6.500 16.300Z" fill="url(#fsy)" fill-opacity=".7"/></svg>
<div class="tr" style="left:99px;top:124px"><span style="letter-spacing:-0.35px">Blind Guardian</span></div>
<div class="a" style="left:70px;top:148px;width:3px;height:1px;background:repeating-linear-gradient(90deg,#9c9c9c 0,#9c9c9c 1px,transparent 1px,transparent 2px)"></div>
<svg class="a" style="left:60px;top:144px" width="9" height="9" viewBox="0 0 9 9"><rect x=".5" y=".5" width="8" height="8" rx="1.5" fill="#f6f6f6" stroke="#8a8a8a"/><rect x="2" y="4" width="5" height="1" fill="#23409a"/><rect x="4" y="2" width="1" height="5" fill="#23409a"/></svg>
<svg class="a" style="left:78px;top:141px" width="14" height="17" viewBox="0 0 14 17"><path d="M10.400 4.600 L12.800 5.200 L12.800 13.800 L10.400 14.400Z" fill="url(#fty)"/><rect x="11.400" y="8.400" width="1" height="2.600" fill="#fff"/><rect x="11.400" y="11" width="1" height="2.300" fill="#36a2ea"/><path d="M5.500 1.600 L9.300 1.700 Q10.700 1.900 10.700 3.400 L10.700 15 Q10.700 15.900 9.800 16 L5.500 16.300Z" fill="url(#fry)"/><path d="M.4 1.500 Q.4 .7 1.200 .7 L5.300 .8 Q6.200 .8 6.200 1.800 L6.200 15.800 Q6.200 16.600 5.300 16.500 L1.200 15.700 Q.4 15.500 .4 14.800Z" fill="url(#fgy)"/><rect x="5.900" y="1.500" width=".6" height="14.800" fill="url(#fsy)"/><path d="M.6 14.600 L6 15.500 L6 16.500 L1.200 15.700Z M6.500 15.400 L10.600 15 L10.600 15.400 Q10.500 16 9.800 16 L6.500 16.300Z" fill="url(#fsy)" fill-opacity=".7"/></svg>
<div class="tr" style="left:99px;top:141px"><span style="letter-spacing:-0.35px">Dark Moor</span></div>
<div class="a" style="left:70px;top:165px;width:3px;height:1px;background:repeating-linear-gradient(90deg,#9c9c9c 0,#9c9c9c 1px,transparent 1px,transparent 2px)"></div>
<svg class="a" style="left:60px;top:161px" width="9" height="9" viewBox="0 0 9 9"><rect x=".5" y=".5" width="8" height="8" rx="1.5" fill="#f6f6f6" stroke="#8a8a8a"/><rect x="2" y="4" width="5" height="1" fill="#23409a"/><rect x="4" y="2" width="1" height="5" fill="#23409a"/></svg>
<svg class="a" style="left:78px;top:158px" width="14" height="17" viewBox="0 0 14 17"><path d="M10.400 4.600 L12.800 5.200 L12.800 13.800 L10.400 14.400Z" fill="url(#fty)"/><rect x="11.400" y="8.400" width="1" height="2.600" fill="#fff"/><rect x="11.400" y="11" width="1" height="2.300" fill="#36a2ea"/><path d="M5.500 1.600 L9.300 1.700 Q10.700 1.900 10.700 3.400 L10.700 15 Q10.700 15.900 9.800 16 L5.500 16.300Z" fill="url(#fry)"/><path d="M.4 1.500 Q.4 .7 1.200 .7 L5.300 .8 Q6.200 .8 6.200 1.800 L6.200 15.800 Q6.200 16.600 5.300 16.500 L1.200 15.700 Q.4 15.500 .4 14.800Z" fill="url(#fgy)"/><rect x="5.900" y="1.500" width=".6" height="14.800" fill="url(#fsy)"/><path d="M.6 14.600 L6 15.500 L6 16.500 L1.200 15.700Z M6.500 15.400 L10.600 15 L10.600 15.400 Q10.500 16 9.800 16 L6.500 16.300Z" fill="url(#fsy)" fill-opacity=".7"/></svg>
<div class="tr" style="left:99px;top:158px"><span style="letter-spacing:-0.35px">Diablo Blvd</span></div>
<div class="a" style="left:70px;top:182px;width:3px;height:1px;background:repeating-linear-gradient(90deg,#9c9c9c 0,#9c9c9c 1px,transparent 1px,transparent 2px)"></div>
<svg class="a" style="left:60px;top:178px" width="9" height="9" viewBox="0 0 9 9"><rect x=".5" y=".5" width="8" height="8" rx="1.5" fill="#f6f6f6" stroke="#8a8a8a"/><rect x="2" y="4" width="5" height="1" fill="#23409a"/><rect x="4" y="2" width="1" height="5" fill="#23409a"/></svg>
<svg class="a" style="left:78px;top:175px" width="14" height="17" viewBox="0 0 14 17"><path d="M10.400 4.600 L12.800 5.200 L12.800 13.800 L10.400 14.400Z" fill="url(#fty)"/><rect x="11.400" y="8.400" width="1" height="2.600" fill="#fff"/><rect x="11.400" y="11" width="1" height="2.300" fill="#36a2ea"/><path d="M5.500 1.600 L9.300 1.700 Q10.700 1.900 10.700 3.400 L10.700 15 Q10.700 15.900 9.800 16 L5.500 16.300Z" fill="url(#fry)"/><path d="M.4 1.500 Q.4 .7 1.200 .7 L5.300 .8 Q6.200 .8 6.200 1.800 L6.200 15.800 Q6.200 16.600 5.300 16.500 L1.200 15.700 Q.4 15.500 .4 14.800Z" fill="url(#fgy)"/><rect x="5.900" y="1.500" width=".6" height="14.800" fill="url(#fsy)"/><path d="M.6 14.600 L6 15.500 L6 16.500 L1.200 15.700Z M6.500 15.400 L10.600 15 L10.600 15.400 Q10.500 16 9.800 16 L6.500 16.300Z" fill="url(#fsy)" fill-opacity=".7"/></svg>
<div class="tr" style="left:99px;top:175px"><span style="letter-spacing:-0.2px">Eluveitie</span></div>
<div class="a" style="left:70px;top:199px;width:3px;height:1px;background:repeating-linear-gradient(90deg,#9c9c9c 0,#9c9c9c 1px,transparent 1px,transparent 2px)"></div>
<svg class="a" style="left:60px;top:195px" width="9" height="9" viewBox="0 0 9 9"><rect x=".5" y=".5" width="8" height="8" rx="1.5" fill="#f6f6f6" stroke="#8a8a8a"/><rect x="2" y="4" width="5" height="1" fill="#23409a"/><rect x="4" y="2" width="1" height="5" fill="#23409a"/></svg>
<svg class="a" style="left:78px;top:192px" width="14" height="17" viewBox="0 0 14 17"><path d="M10.400 4.600 L12.800 5.200 L12.800 13.800 L10.400 14.400Z" fill="url(#fty)"/><rect x="11.400" y="8.400" width="1" height="2.600" fill="#fff"/><rect x="11.400" y="11" width="1" height="2.300" fill="#36a2ea"/><path d="M5.500 1.600 L9.300 1.700 Q10.700 1.900 10.700 3.400 L10.700 15 Q10.700 15.900 9.800 16 L5.500 16.300Z" fill="url(#fry)"/><path d="M.4 1.500 Q.4 .7 1.200 .7 L5.300 .8 Q6.200 .8 6.200 1.800 L6.200 15.800 Q6.200 16.600 5.300 16.500 L1.200 15.700 Q.4 15.500 .4 14.800Z" fill="url(#fgy)"/><rect x="5.900" y="1.500" width=".6" height="14.800" fill="url(#fsy)"/><path d="M.6 14.600 L6 15.500 L6 16.500 L1.200 15.700Z M6.500 15.400 L10.600 15 L10.600 15.400 Q10.500 16 9.800 16 L6.500 16.300Z" fill="url(#fsy)" fill-opacity=".7"/></svg>
<div class="tr" style="left:99px;top:192px"><span style="letter-spacing:-0.24px">Feuerschwanz</span></div>
<div class="a" style="left:70px;top:216px;width:3px;height:1px;background:repeating-linear-gradient(90deg,#9c9c9c 0,#9c9c9c 1px,transparent 1px,transparent 2px)"></div>
<svg class="a" style="left:60px;top:212px" width="9" height="9" viewBox="0 0 9 9"><rect x=".5" y=".5" width="8" height="8" rx="1.5" fill="#f6f6f6" stroke="#8a8a8a"/><rect x="2" y="4" width="5" height="1" fill="#23409a"/><rect x="4" y="2" width="1" height="5" fill="#23409a"/></svg>
<svg class="a" style="left:78px;top:209px" width="14" height="17" viewBox="0 0 14 17"><path d="M10.400 4.600 L12.800 5.200 L12.800 13.800 L10.400 14.400Z" fill="url(#fty)"/><rect x="11.400" y="8.400" width="1" height="2.600" fill="#fff"/><rect x="11.400" y="11" width="1" height="2.300" fill="#36a2ea"/><path d="M5.500 1.600 L9.300 1.700 Q10.700 1.900 10.700 3.400 L10.700 15 Q10.700 15.900 9.800 16 L5.500 16.300Z" fill="url(#fry)"/><path d="M.4 1.500 Q.4 .7 1.200 .7 L5.300 .8 Q6.200 .8 6.200 1.800 L6.200 15.800 Q6.200 16.600 5.300 16.500 L1.200 15.700 Q.4 15.500 .4 14.800Z" fill="url(#fgy)"/><rect x="5.900" y="1.500" width=".6" height="14.800" fill="url(#fsy)"/><path d="M.6 14.600 L6 15.500 L6 16.500 L1.200 15.700Z M6.500 15.400 L10.600 15 L10.600 15.400 Q10.500 16 9.800 16 L6.500 16.300Z" fill="url(#fsy)" fill-opacity=".7"/></svg>
<div class="tr" style="left:99px;top:209px"><span style="letter-spacing:-0.27px">Grave Digger</span></div>
<div class="a" style="left:70px;top:233px;width:3px;height:1px;background:repeating-linear-gradient(90deg,#9c9c9c 0,#9c9c9c 1px,transparent 1px,transparent 2px)"></div>
<svg class="a" style="left:60px;top:229px" width="9" height="9" viewBox="0 0 9 9"><rect x=".5" y=".5" width="8" height="8" rx="1.5" fill="#f6f6f6" stroke="#8a8a8a"/><rect x="2" y="4" width="5" height="1" fill="#23409a"/></svg>
<svg class="a" style="left:78px;top:226px" width="14" height="17" viewBox="0 0 14 17"><path d="M10.400 4.600 L12.800 5.200 L12.800 13.800 L10.400 14.400Z" fill="url(#fty)"/><rect x="11.400" y="8.400" width="1" height="2.600" fill="#fff"/><rect x="11.400" y="11" width="1" height="2.300" fill="#36a2ea"/><path d="M5.500 1.600 L9.300 1.700 Q10.700 1.900 10.700 3.400 L10.700 15 Q10.700 15.900 9.800 16 L5.500 16.300Z" fill="url(#fry)"/><path d="M.4 1.500 Q.4 .7 1.200 .7 L5.300 .8 Q6.200 .8 6.200 1.800 L6.200 15.800 Q6.200 16.600 5.300 16.500 L1.200 15.700 Q.4 15.500 .4 14.800Z" fill="url(#fgy)"/><rect x="5.900" y="1.500" width=".6" height="14.800" fill="url(#fsy)"/><path d="M.6 14.600 L6 15.500 L6 16.500 L1.200 15.700Z M6.500 15.400 L10.600 15 L10.600 15.400 Q10.500 16 9.800 16 L6.500 16.300Z" fill="url(#fsy)" fill-opacity=".7"/></svg>
<div class="tr" style="left:99px;top:226px"><span style="letter-spacing:-0.26px">Helloween</span></div>
<div class="a" style="left:83px;top:250px;width:8px;height:1px;background:repeating-linear-gradient(90deg,#9c9c9c 0,#9c9c9c 1px,transparent 1px,transparent 2px)"></div>
<svg class="a" style="left:96px;top:243px" width="14" height="17" viewBox="0 0 14 17"><path d="M10.400 4.600 L12.800 5.200 L12.800 13.800 L10.400 14.400Z" fill="url(#fty)"/><rect x="11.400" y="8.400" width="1" height="2.600" fill="#fff"/><rect x="11.400" y="11" width="1" height="2.300" fill="#36a2ea"/><path d="M5.500 1.600 L9.300 1.700 Q10.700 1.900 10.700 3.400 L10.700 15 Q10.700 15.900 9.800 16 L5.500 16.300Z" fill="url(#fry)"/><path d="M.4 1.500 Q.4 .7 1.200 .7 L5.300 .8 Q6.200 .8 6.200 1.800 L6.200 15.800 Q6.200 16.600 5.300 16.500 L1.200 15.700 Q.4 15.500 .4 14.800Z" fill="url(#fgy)"/><rect x="5.900" y="1.500" width=".6" height="14.800" fill="url(#fsy)"/><path d="M.6 14.600 L6 15.500 L6 16.500 L1.200 15.700Z M6.500 15.400 L10.600 15 L10.600 15.400 Q10.500 16 9.800 16 L6.500 16.300Z" fill="url(#fsy)" fill-opacity=".7"/></svg>
<div class="tr" style="left:117px;top:243px">1987 - Keeper Of The Seven Keys Part I</div>
<div class="a" style="left:83px;top:267px;width:8px;height:1px;background:repeating-linear-gradient(90deg,#9c9c9c 0,#9c9c9c 1px,transparent 1px,transparent 2px)"></div>
<svg class="a" style="left:96px;top:260px" width="14" height="17" viewBox="0 0 14 17"><path d="M10.400 4.600 L12.800 5.200 L12.800 13.800 L10.400 14.400Z" fill="url(#fty)"/><rect x="11.400" y="8.400" width="1" height="2.600" fill="#fff"/><rect x="11.400" y="11" width="1" height="2.300" fill="#36a2ea"/><path d="M5.500 1.600 L9.300 1.700 Q10.700 1.900 10.700 3.400 L10.700 15 Q10.700 15.900 9.800 16 L5.500 16.300Z" fill="url(#fry)"/><path d="M.4 1.500 Q.4 .7 1.200 .7 L5.300 .8 Q6.200 .8 6.200 1.800 L6.200 15.800 Q6.200 16.600 5.300 16.500 L1.200 15.700 Q.4 15.500 .4 14.800Z" fill="url(#fgy)"/><rect x="5.900" y="1.500" width=".6" height="14.800" fill="url(#fsy)"/><path d="M.6 14.600 L6 15.500 L6 16.500 L1.200 15.700Z M6.500 15.400 L10.600 15 L10.600 15.400 Q10.500 16 9.800 16 L6.500 16.300Z" fill="url(#fsy)" fill-opacity=".7"/></svg>
<div class="tr" style="left:117px;top:260px">1988 - Keeper Of The Seven Keys Part II</div>
<div class="a" style="left:83px;top:284px;width:8px;height:1px;background:repeating-linear-gradient(90deg,#9c9c9c 0,#9c9c9c 1px,transparent 1px,transparent 2px)"></div>
<svg class="a" style="left:96px;top:277px" width="14" height="17" viewBox="0 0 14 17"><path d="M10.400 4.600 L12.800 5.200 L12.800 13.800 L10.400 14.400Z" fill="url(#fty)"/><rect x="11.400" y="8.400" width="1" height="2.600" fill="#fff"/><rect x="11.400" y="11" width="1" height="2.300" fill="#36a2ea"/><path d="M5.500 1.600 L9.300 1.700 Q10.700 1.900 10.700 3.400 L10.700 15 Q10.700 15.900 9.800 16 L5.500 16.300Z" fill="url(#fry)"/><path d="M.4 1.500 Q.4 .7 1.200 .7 L5.300 .8 Q6.200 .8 6.200 1.800 L6.200 15.800 Q6.200 16.600 5.300 16.500 L1.200 15.700 Q.4 15.500 .4 14.800Z" fill="url(#fgy)"/><rect x="5.900" y="1.500" width=".6" height="14.800" fill="url(#fsy)"/><path d="M.6 14.600 L6 15.500 L6 16.500 L1.200 15.700Z M6.500 15.400 L10.600 15 L10.600 15.400 Q10.500 16 9.800 16 L6.500 16.300Z" fill="url(#fsy)" fill-opacity=".7"/></svg>
<div class="tr" style="left:117px;top:277px">2015 - My God-Given Right</div>
<div class="a" style="left:70px;top:301px;width:3px;height:1px;background:repeating-linear-gradient(90deg,#9c9c9c 0,#9c9c9c 1px,transparent 1px,transparent 2px)"></div>
<svg class="a" style="left:60px;top:297px" width="9" height="9" viewBox="0 0 9 9"><rect x=".5" y=".5" width="8" height="8" rx="1.5" fill="#f6f6f6" stroke="#8a8a8a"/><rect x="2" y="4" width="5" height="1" fill="#23409a"/><rect x="4" y="2" width="1" height="5" fill="#23409a"/></svg>
<svg class="a" style="left:78px;top:294px" width="14" height="17" viewBox="0 0 14 17"><path d="M10.400 4.600 L12.800 5.200 L12.800 13.800 L10.400 14.400Z" fill="url(#fty)"/><rect x="11.400" y="8.400" width="1" height="2.600" fill="#fff"/><rect x="11.400" y="11" width="1" height="2.300" fill="#36a2ea"/><path d="M5.500 1.600 L9.300 1.700 Q10.700 1.900 10.700 3.400 L10.700 15 Q10.700 15.900 9.800 16 L5.500 16.300Z" fill="url(#fry)"/><path d="M.4 1.500 Q.4 .7 1.200 .7 L5.300 .8 Q6.200 .8 6.200 1.800 L6.200 15.800 Q6.200 16.600 5.300 16.500 L1.200 15.700 Q.4 15.500 .4 14.800Z" fill="url(#fgy)"/><rect x="5.900" y="1.500" width=".6" height="14.800" fill="url(#fsy)"/><path d="M.6 14.600 L6 15.500 L6 16.500 L1.200 15.700Z M6.500 15.400 L10.600 15 L10.600 15.400 Q10.500 16 9.800 16 L6.500 16.300Z" fill="url(#fsy)" fill-opacity=".7"/></svg>
<div class="tr" style="left:99px;top:294px">In Extremo</div>
<div class="a" style="left:70px;top:318px;width:3px;height:1px;background:repeating-linear-gradient(90deg,#9c9c9c 0,#9c9c9c 1px,transparent 1px,transparent 2px)"></div>
<svg class="a" style="left:60px;top:314px" width="9" height="9" viewBox="0 0 9 9"><rect x=".5" y=".5" width="8" height="8" rx="1.5" fill="#f6f6f6" stroke="#8a8a8a"/><rect x="2" y="4" width="5" height="1" fill="#23409a"/><rect x="4" y="2" width="1" height="5" fill="#23409a"/></svg>
<svg class="a" style="left:78px;top:311px" width="14" height="17" viewBox="0 0 14 17"><path d="M10.400 4.600 L12.800 5.200 L12.800 13.800 L10.400 14.400Z" fill="url(#fty)"/><rect x="11.400" y="8.400" width="1" height="2.600" fill="#fff"/><rect x="11.400" y="11" width="1" height="2.300" fill="#36a2ea"/><path d="M5.500 1.600 L9.300 1.700 Q10.700 1.900 10.700 3.400 L10.700 15 Q10.700 15.900 9.800 16 L5.500 16.300Z" fill="url(#fry)"/><path d="M.4 1.500 Q.4 .7 1.200 .7 L5.300 .8 Q6.200 .8 6.200 1.800 L6.200 15.800 Q6.200 16.600 5.300 16.500 L1.200 15.700 Q.4 15.500 .4 14.800Z" fill="url(#fgy)"/><rect x="5.900" y="1.500" width=".6" height="14.800" fill="url(#fsy)"/><path d="M.6 14.600 L6 15.500 L6 16.500 L1.200 15.700Z M6.500 15.400 L10.600 15 L10.600 15.400 Q10.500 16 9.800 16 L6.500 16.300Z" fill="url(#fsy)" fill-opacity=".7"/></svg>
<div class="tr" style="left:99px;top:311px">Korpiklaani</div>
<div class="a" style="left:70px;top:335px;width:3px;height:1px;background:repeating-linear-gradient(90deg,#9c9c9c 0,#9c9c9c 1px,transparent 1px,transparent 2px)"></div>
<svg class="a" style="left:60px;top:331px" width="9" height="9" viewBox="0 0 9 9"><rect x=".5" y=".5" width="8" height="8" rx="1.5" fill="#f6f6f6" stroke="#8a8a8a"/><rect x="2" y="4" width="5" height="1" fill="#23409a"/><rect x="4" y="2" width="1" height="5" fill="#23409a"/></svg>
<svg class="a" style="left:78px;top:328px" width="14" height="17" viewBox="0 0 14 17"><path d="M10.400 4.600 L12.800 5.200 L12.800 13.800 L10.400 14.400Z" fill="url(#fty)"/><rect x="11.400" y="8.400" width="1" height="2.600" fill="#fff"/><rect x="11.400" y="11" width="1" height="2.300" fill="#36a2ea"/><path d="M5.500 1.600 L9.300 1.700 Q10.700 1.900 10.700 3.400 L10.700 15 Q10.700 15.900 9.800 16 L5.500 16.300Z" fill="url(#fry)"/><path d="M.4 1.500 Q.4 .7 1.200 .7 L5.300 .8 Q6.200 .8 6.200 1.800 L6.200 15.800 Q6.200 16.600 5.300 16.500 L1.200 15.700 Q.4 15.500 .4 14.800Z" fill="url(#fgy)"/><rect x="5.900" y="1.500" width=".6" height="14.800" fill="url(#fsy)"/><path d="M.6 14.600 L6 15.500 L6 16.500 L1.200 15.700Z M6.500 15.400 L10.600 15 L10.600 15.400 Q10.500 16 9.800 16 L6.500 16.300Z" fill="url(#fsy)" fill-opacity=".7"/></svg>
<div class="tr" style="left:99px;top:328px">Manowar</div>
<div class="a" style="left:70px;top:352px;width:3px;height:1px;background:repeating-linear-gradient(90deg,#9c9c9c 0,#9c9c9c 1px,transparent 1px,transparent 2px)"></div>
<svg class="a" style="left:60px;top:348px" width="9" height="9" viewBox="0 0 9 9"><rect x=".5" y=".5" width="8" height="8" rx="1.5" fill="#f6f6f6" stroke="#8a8a8a"/><rect x="2" y="4" width="5" height="1" fill="#23409a"/><rect x="4" y="2" width="1" height="5" fill="#23409a"/></svg>
<svg class="a" style="left:78px;top:345px" width="14" height="17" viewBox="0 0 14 17"><path d="M10.400 4.600 L12.800 5.200 L12.800 13.800 L10.400 14.400Z" fill="url(#fty)"/><rect x="11.400" y="8.400" width="1" height="2.600" fill="#fff"/><rect x="11.400" y="11" width="1" height="2.300" fill="#36a2ea"/><path d="M5.500 1.600 L9.300 1.700 Q10.700 1.900 10.700 3.400 L10.700 15 Q10.700 15.900 9.800 16 L5.500 16.300Z" fill="url(#fry)"/><path d="M.4 1.500 Q.4 .7 1.200 .7 L5.300 .8 Q6.200 .8 6.200 1.800 L6.200 15.800 Q6.200 16.600 5.300 16.500 L1.200 15.700 Q.4 15.500 .4 14.800Z" fill="url(#fgy)"/><rect x="5.900" y="1.500" width=".6" height="14.800" fill="url(#fsy)"/><path d="M.6 14.600 L6 15.500 L6 16.500 L1.200 15.700Z M6.500 15.400 L10.600 15 L10.600 15.400 Q10.500 16 9.800 16 L6.500 16.300Z" fill="url(#fsy)" fill-opacity=".7"/></svg>
<div class="tr" style="left:99px;top:345px">Megadeth</div>
<div class="a" style="left:70px;top:369px;width:3px;height:1px;background:repeating-linear-gradient(90deg,#9c9c9c 0,#9c9c9c 1px,transparent 1px,transparent 2px)"></div>
<svg class="a" style="left:60px;top:365px" width="9" height="9" viewBox="0 0 9 9"><rect x=".5" y=".5" width="8" height="8" rx="1.5" fill="#f6f6f6" stroke="#8a8a8a"/><rect x="2" y="4" width="5" height="1" fill="#23409a"/></svg>
<svg class="a" style="left:78px;top:362px" width="14" height="17" viewBox="0 0 14 17"><path d="M10.400 4.600 L12.800 5.200 L12.800 13.800 L10.400 14.400Z" fill="url(#fty)"/><rect x="11.400" y="8.400" width="1" height="2.600" fill="#fff"/><rect x="11.400" y="11" width="1" height="2.300" fill="#36a2ea"/><path d="M5.500 1.600 L9.300 1.700 Q10.700 1.900 10.700 3.400 L10.700 15 Q10.700 15.900 9.800 16 L5.500 16.300Z" fill="url(#fry)"/><path d="M.4 1.500 Q.4 .7 1.200 .7 L5.300 .8 Q6.200 .8 6.200 1.800 L6.200 15.800 Q6.200 16.600 5.300 16.500 L1.200 15.700 Q.4 15.500 .4 14.800Z" fill="url(#fgy)"/><rect x="5.900" y="1.500" width=".6" height="14.800" fill="url(#fsy)"/><path d="M.6 14.600 L6 15.500 L6 16.500 L1.200 15.700Z M6.500 15.400 L10.600 15 L10.600 15.400 Q10.500 16 9.800 16 L6.500 16.300Z" fill="url(#fsy)" fill-opacity=".7"/></svg>
<div class="tr" style="left:99px;top:362px">Metallica</div>
<div class="a" style="left:83px;top:386px;width:8px;height:1px;background:repeating-linear-gradient(90deg,#9c9c9c 0,#9c9c9c 1px,transparent 1px,transparent 2px)"></div>
<svg class="a" style="left:96px;top:379px" width="14" height="17" viewBox="0 0 14 17"><path d="M10.400 4.600 L12.800 5.200 L12.800 13.800 L10.400 14.400Z" fill="url(#fty)"/><rect x="11.400" y="8.400" width="1" height="2.600" fill="#fff"/><rect x="11.400" y="11" width="1" height="2.300" fill="#36a2ea"/><path d="M5.500 1.600 L9.300 1.700 Q10.700 1.900 10.700 3.400 L10.700 15 Q10.700 15.900 9.800 16 L5.500 16.300Z" fill="url(#fry)"/><path d="M.4 1.500 Q.4 .7 1.200 .7 L5.300 .8 Q6.200 .8 6.200 1.800 L6.200 15.800 Q6.200 16.600 5.300 16.500 L1.200 15.700 Q.4 15.500 .4 14.800Z" fill="url(#fgy)"/><rect x="5.900" y="1.500" width=".6" height="14.800" fill="url(#fsy)"/><path d="M.6 14.600 L6 15.500 L6 16.500 L1.200 15.700Z M6.500 15.400 L10.600 15 L10.600 15.400 Q10.500 16 9.800 16 L6.500 16.300Z" fill="url(#fsy)" fill-opacity=".7"/></svg>
<div class="tr" style="left:117px;top:379px">1984 - Ride The Lightning</div>
<div class="a" style="left:83px;top:403px;width:8px;height:1px;background:repeating-linear-gradient(90deg,#9c9c9c 0,#9c9c9c 1px,transparent 1px,transparent 2px)"></div>
<svg class="a" style="left:96px;top:396px" width="14" height="17" viewBox="0 0 14 17"><path d="M10.400 4.600 L12.800 5.200 L12.800 13.800 L10.400 14.400Z" fill="url(#fty)"/><rect x="11.400" y="8.400" width="1" height="2.600" fill="#fff"/><rect x="11.400" y="11" width="1" height="2.300" fill="#36a2ea"/><path d="M5.500 1.600 L9.300 1.700 Q10.700 1.900 10.700 3.400 L10.700 15 Q10.700 15.900 9.800 16 L5.500 16.300Z" fill="url(#fry)"/><path d="M.4 1.500 Q.4 .7 1.200 .7 L5.300 .8 Q6.200 .8 6.200 1.800 L6.200 15.800 Q6.200 16.600 5.300 16.500 L1.200 15.700 Q.4 15.500 .4 14.800Z" fill="url(#fgy)"/><rect x="5.900" y="1.500" width=".6" height="14.800" fill="url(#fsy)"/><path d="M.6 14.600 L6 15.500 L6 16.500 L1.200 15.700Z M6.500 15.400 L10.600 15 L10.600 15.400 Q10.500 16 9.800 16 L6.500 16.300Z" fill="url(#fsy)" fill-opacity=".7"/></svg>
<div class="tr" style="left:117px;top:396px">1986 - Master Of Puppets</div>
<div class="a" style="left:83px;top:420px;width:8px;height:1px;background:repeating-linear-gradient(90deg,#9c9c9c 0,#9c9c9c 1px,transparent 1px,transparent 2px)"></div>
<svg class="a" style="left:96px;top:413px" width="14" height="17" viewBox="0 0 14 17"><path d="M10.400 4.600 L12.800 5.200 L12.800 13.800 L10.400 14.400Z" fill="url(#fty)"/><rect x="11.400" y="8.400" width="1" height="2.600" fill="#fff"/><rect x="11.400" y="11" width="1" height="2.300" fill="#36a2ea"/><path d="M5.500 1.600 L9.300 1.700 Q10.700 1.900 10.700 3.400 L10.700 15 Q10.700 15.900 9.800 16 L5.500 16.300Z" fill="url(#fry)"/><path d="M.4 1.500 Q.4 .7 1.200 .7 L5.300 .8 Q6.200 .8 6.200 1.800 L6.200 15.800 Q6.200 16.600 5.300 16.500 L1.200 15.700 Q.4 15.500 .4 14.800Z" fill="url(#fgy)"/><rect x="5.900" y="1.500" width=".6" height="14.800" fill="url(#fsy)"/><path d="M.6 14.600 L6 15.500 L6 16.500 L1.200 15.700Z M6.500 15.400 L10.600 15 L10.600 15.400 Q10.500 16 9.800 16 L6.500 16.300Z" fill="url(#fsy)" fill-opacity=".7"/></svg>
<div class="tr" style="left:117px;top:413px">1988 - …And Justice For All</div>
<div class="a" style="left:83px;top:437px;width:8px;height:1px;background:repeating-linear-gradient(90deg,#9c9c9c 0,#9c9c9c 1px,transparent 1px,transparent 2px)"></div>
<svg class="a" style="left:96px;top:430px" width="14" height="17" viewBox="0 0 14 17"><path d="M10.400 4.600 L12.800 5.200 L12.800 13.800 L10.400 14.400Z" fill="url(#fty)"/><rect x="11.400" y="8.400" width="1" height="2.600" fill="#fff"/><rect x="11.400" y="11" width="1" height="2.300" fill="#36a2ea"/><path d="M5.500 1.600 L9.300 1.700 Q10.700 1.900 10.700 3.400 L10.700 15 Q10.700 15.900 9.800 16 L5.500 16.300Z" fill="url(#fry)"/><path d="M.4 1.500 Q.4 .7 1.200 .7 L5.300 .8 Q6.200 .8 6.200 1.800 L6.200 15.800 Q6.200 16.600 5.300 16.500 L1.200 15.700 Q.4 15.500 .4 14.800Z" fill="url(#fgy)"/><rect x="5.900" y="1.500" width=".6" height="14.800" fill="url(#fsy)"/><path d="M.6 14.600 L6 15.500 L6 16.500 L1.200 15.700Z M6.500 15.400 L10.600 15 L10.600 15.400 Q10.500 16 9.800 16 L6.500 16.300Z" fill="url(#fsy)" fill-opacity=".7"/></svg>
<div class="tr" style="left:117px;top:430px">1991 - Metallica</div>
<div class="a" style="left:83px;top:454px;width:8px;height:1px;background:repeating-linear-gradient(90deg,#9c9c9c 0,#9c9c9c 1px,transparent 1px,transparent 2px)"></div>
<svg class="a" style="left:96px;top:447px" width="14" height="17" viewBox="0 0 14 17"><path d="M10.400 4.600 L12.800 5.200 L12.800 13.800 L10.400 14.400Z" fill="url(#fty)"/><rect x="11.400" y="8.400" width="1" height="2.600" fill="#fff"/><rect x="11.400" y="11" width="1" height="2.300" fill="#36a2ea"/><path d="M5.500 1.600 L9.300 1.700 Q10.700 1.900 10.700 3.400 L10.700 15 Q10.700 15.900 9.800 16 L5.500 16.300Z" fill="url(#fry)"/><path d="M.4 1.500 Q.4 .7 1.200 .7 L5.300 .8 Q6.200 .8 6.200 1.800 L6.200 15.800 Q6.200 16.600 5.300 16.500 L1.200 15.700 Q.4 15.500 .4 14.800Z" fill="url(#fgy)"/><rect x="5.900" y="1.500" width=".6" height="14.800" fill="url(#fsy)"/><path d="M.6 14.600 L6 15.500 L6 16.500 L1.200 15.700Z M6.500 15.400 L10.600 15 L10.600 15.400 Q10.500 16 9.800 16 L6.500 16.300Z" fill="url(#fsy)" fill-opacity=".7"/></svg>
<div class="tr" style="left:117px;top:447px">2003 - St. Anger</div></div>
<svg width="0" height="0" class="a"><defs><linearGradient id="pg" x1="0" y1="0" x2=".75" y2="1"><stop offset="0" stop-color="#ffffff"/><stop offset=".45" stop-color="#eef6fd"/><stop offset=".75" stop-color="#9cd0f4"/><stop offset="1" stop-color="#3a9ee6"/></linearGradient><linearGradient id="agv" x1="0" y1="0" x2="0" y2="1"><stop offset=".25" stop-color="#fff"/><stop offset=".75" stop-color="#8a8a8a"/></linearGradient><linearGradient id="agh" x1="0" y1="0" x2="1" y2="0"><stop offset=".25" stop-color="#fff"/><stop offset=".75" stop-color="#8a8a8a"/></linearGradient></defs></svg>
<div class="a" style="left:223px;top:152px;width:17px;height:453px;background:#050505"></div>
<div class="a" style="left:224px;top:169px;width:15px;height:419px;background:linear-gradient(90deg,#1b1b1b,#2b2b2b);border-left:1px solid #6a6a6a"></div>
<div class="a" style="left:224px;top:153px;width:15px;height:15px;background:linear-gradient(90deg,#3d3d3d 0,#323232 50%,#242424 50%,#2a2a2a 100%);border-top:1px solid #7c7c7c;border-left:1px solid #7c7c7c;box-shadow:0 0 0 1px #050505"><svg class="a" style="left:-1px;top:-1px" width="15" height="15" viewBox="0 0 15 15"><path d="M2.500 9.500 L7.500 4.500 L12.500 9.500Z" fill="url(#agv)"/></svg></div>
<div class="a" style="left:224px;top:589px;width:15px;height:15px;background:linear-gradient(90deg,#3d3d3d 0,#323232 50%,#242424 50%,#2a2a2a 100%);border-top:1px solid #7c7c7c;border-left:1px solid #7c7c7c;box-shadow:0 0 0 1px #050505"><svg class="a" style="left:-1px;top:-1px" width="15" height="15" viewBox="0 0 15 15"><path d="M2.500 5.500 L7.500 10.500 L12.500 5.500Z" fill="url(#agv)"/></svg></div>
<div class="a" style="left:224px;top:314px;width:15px;height:131px;background:linear-gradient(90deg,#424242 0,#343434 50%,#282828 50%,#2c2c2c 100%);border-top:1px solid #7c7c7c;border-left:1px solid #7c7c7c;box-shadow:0 0 0 1px #050505"></div>
<div class="a" style="left:228px;top:375px;width:7px;height:8px;background:repeating-linear-gradient(#c8c8c8 0,#c8c8c8 1px,transparent 1px,transparent 2px)"></div>
<div class="a" style="left:223px;top:605px;width:17px;height:17px;background:#222"></div>
<div class="a" style="left:8px;top:605px;width:215px;height:17px;background:#050505"></div>
<div class="a" style="left:25px;top:606px;width:181px;height:15px;background:linear-gradient(#1b1b1b,#2b2b2b);border-top:1px solid #5a5a5a"></div>
<div class="a" style="left:9px;top:606px;width:15px;height:15px;background:linear-gradient(#3d3d3d 0,#323232 50%,#242424 50%,#2a2a2a 100%);border-top:1px solid #7c7c7c;border-left:1px solid #7c7c7c;box-shadow:0 0 0 1px #050505"><svg class="a" style="left:-1px;top:-1px" width="15" height="15" viewBox="0 0 15 15"><path d="M9.500 2.500 L4.500 7.500 L9.500 12.500Z" fill="url(#agh)"/></svg></div>
<div class="a" style="left:207px;top:606px;width:15px;height:15px;background:linear-gradient(#3d3d3d 0,#323232 50%,#242424 50%,#2a2a2a 100%);border-top:1px solid #7c7c7c;border-left:1px solid #7c7c7c;box-shadow:0 0 0 1px #050505"><svg class="a" style="left:-1px;top:-1px" width="15" height="15" viewBox="0 0 15 15"><path d="M5.500 2.500 L10.500 7.500 L5.500 12.500Z" fill="url(#agh)"/></svg></div>
<div class="a" style="left:27px;top:606px;width:117px;height:15px;background:linear-gradient(#424242 0,#343434 50%,#282828 50%,#2c2c2c 100%);border-top:1px solid #7c7c7c;border-left:1px solid #7c7c7c;box-shadow:0 0 0 1px #050505"></div>
<div class="a" style="left:81px;top:610px;width:8px;height:7px;background:repeating-linear-gradient(90deg,#c8c8c8 0,#c8c8c8 1px,transparent 1px,transparent 2px)"></div>
<div class="a" style="left:246px;top:364px;width:2px;height:2px;background:#e4e4e4"></div>
<div class="a" style="left:246px;top:369px;width:2px;height:2px;background:#e4e4e4"></div>
<div class="a" style="left:246px;top:374px;width:2px;height:2px;background:#e4e4e4"></div>
<div class="a" style="left:246px;top:379px;width:2px;height:2px;background:#e4e4e4"></div>
<div class="a" style="left:246px;top:384px;width:2px;height:2px;background:#e4e4e4"></div>
<svg class="a" style="left:15px;top:470px;z-index:9" width="140" height="135" viewBox="25 480 140 135"><g opacity=".6"><path d="M88.8 484.5 L115.8 511.5 L88.8 538.5 L61.8 511.5Z" fill="#e8636b" fill-opacity="1"/><path d="M56.5 517 L83.5 544 L56.5 571 L29.5 544Z" fill="#486398" fill-opacity="1"/><path d="M121.5 517 L148.5 544 L121.5 571 L94.5 544Z" fill="#69508b" fill-opacity="1"/><path d="M88.8 549.5 L115.8 576.5 L88.8 603.5 L61.8 576.5Z" fill="#056950" fill-opacity="1"/><path d="M88.8 517 L115.8 544 L88.8 571 L61.8 544Z" fill="#f59b48" fill-opacity="1"/><path d="M102.500 508.500 L98 505.300 L96 504 L93.500 504.300 L91.300 507 L90.500 512 L91.500 517 L94 522 L96 527 L96 530.500 L91 531 L84 533.500 L76 538 L68 543.500 L62 548 L66 548.500 L64.500 552 L69.500 551.500 L70 555.500 L75 553 L79 555 L82.500 559 L85 564 L83.800 571 L83 580 L85 580 L86.500 571 L88.500 564 L92 560 L96 557.500 L98 559 L97 567 L98.500 567 L99.500 558 L97 555.500 L99.500 550 L101.500 543 L102 537 L101 532 L100.500 528 L98.500 523 L96 518 L95 513 L95.500 509.800 L97.500 508.300 L100 509Z" fill="#44464e"/></g><text x="29" y="595" font-family="Liberation Sans, DejaVu Sans, sans-serif" font-weight="bold" font-style="italic" font-size="14" textLength="76" lengthAdjust="spacingAndGlyphs" fill="#e04858" fill-opacity=".6">GRANDER</text><text x="105.500" y="595" font-family="Liberation Sans, DejaVu Sans, sans-serif" font-weight="bold" font-style="italic" font-size="14" textLength="42" lengthAdjust="spacingAndGlyphs" fill="#5068b0" fill-opacity=".58">SOFT</text></svg>
<div class="a" style="left:251px;top:125px;width:613px;height:236px;background:#111;border:1px solid #747474;border-right-color:#333;border-bottom-color:#9c9c9c"></div>
<div class="hdr" style="left:252px;width:250px;border-left:none;padding-left:4px"><span style="letter-spacing:-0.45px">File name</span></div>
<div class="hdr" style="left:502px;width:80px;text-align:right;padding-right:9px"><span style="letter-spacing:-0.35px">File size</span></div>
<div class="hdr" style="left:582px;width:150px;"><span style="letter-spacing:0.06px">Artist</span></div>
<div class="hdr" style="left:732px;width:131px;"><span style="letter-spacing:-0.24px">Title</span></div>
<svg class="a" style="left:311px;top:133px" width="12" height="8" viewBox="0 0 12 8"><path d="M1 6.500 L5.500 1.500 L10 6.500Z" fill="#e8e8e8"/></svg>
<div class="a" style="left:252px;top:150px;width:611px;height:192px;background:#c1c1c1"></div>
<div class="row" style="top:150px;"><svg class="a" style="left:3px;top:1px" width="16" height="16" viewBox="0 0 16 16"><path d="M2.500 .5 L10.500 .5 L14 4 L14 14 L2.500 14Z" fill="url(#pg)"/><path d="M10.500 .5 L10.500 4 L14 4Z" fill="#5cb2ee"/><path d="M10.500 .5 L10.500 4 L14 4" fill="none" stroke="#d8ecfa" stroke-width=".6"/><text x=".2" y="10.600" font-family="Liberation Sans, DejaVu Sans, sans-serif" font-weight="bold" font-size="7.400" letter-spacing="-0.6" fill="#000">mp3</text></svg><span style="left:21px">30 Seconds To Mars - 01 - Capricorn (A Bra…</span><span style="right:289px">9351378</span><span style="left:335px">30 Seconds To Mars</span><span style="left:484.500px">Capricorn (A Brand New …</span></div>
<div class="row" style="top:167px;"><svg class="a" style="left:3px;top:1px" width="16" height="16" viewBox="0 0 16 16"><path d="M2.500 .5 L10.500 .5 L14 4 L14 14 L2.500 14Z" fill="url(#pg)"/><path d="M10.500 .5 L10.500 4 L14 4Z" fill="#5cb2ee"/><path d="M10.500 .5 L10.500 4 L14 4" fill="none" stroke="#d8ecfa" stroke-width=".6"/><text x=".2" y="10.600" font-family="Liberation Sans, DejaVu Sans, sans-serif" font-weight="bold" font-size="7.400" letter-spacing="-0.6" fill="#000">mp3</text></svg><span style="left:21px">30 Seconds To Mars - 02 - Edge of the Eart…</span><span style="right:289px">11131884</span><span style="left:335px">30 Seconds To Mars</span><span style="left:484.500px"><span style="letter-spacing:-0.05px">Edge of the Earth</span></span></div>
<div class="row" style="top:184px;"><svg class="a" style="left:3px;top:1px" width="16" height="16" viewBox="0 0 16 16"><path d="M2.500 .5 L10.500 .5 L14 4 L14 14 L2.500 14Z" fill="url(#pg)"/><path d="M10.500 .5 L10.500 4 L14 4Z" fill="#5cb2ee"/><path d="M10.500 .5 L10.500 4 L14 4" fill="none" stroke="#d8ecfa" stroke-width=".6"/><text x=".2" y="10.600" font-family="Liberation Sans, DejaVu Sans, sans-serif" font-weight="bold" font-size="7.400" letter-spacing="-0.6" fill="#000">mp3</text></svg><span style="left:21px">30 Seconds To Mars - 03 - Fallen.mp3</span><span style="right:289px">11996015</span><span style="left:335px">30 Seconds To Mars</span><span style="left:484.500px"><span style="letter-spacing:-0.41px">Fallen</span></span></div>
<div class="row" style="top:201px;"><svg class="a" style="left:3px;top:1px" width="16" height="16" viewBox="0 0 16 16"><path d="M2.500 .5 L10.500 .5 L14 4 L14 14 L2.500 14Z" fill="url(#pg)"/><path d="M10.500 .5 L10.500 4 L14 4Z" fill="#5cb2ee"/><path d="M10.500 .5 L10.500 4 L14 4" fill="none" stroke="#d8ecfa" stroke-width=".6"/><text x=".2" y="10.600" font-family="Liberation Sans, DejaVu Sans, sans-serif" font-weight="bold" font-size="7.400" letter-spacing="-0.6" fill="#000">mp3</text></svg><span style="left:21px">30 Seconds To Mars - 04 - Oblivion.mp3</span><span style="right:289px">8399476</span><span style="left:335px">30 Seconds To Mars</span><span style="left:484.500px"><span style="letter-spacing:-0.23px">Oblivion</span></span></div>
<div class="row" style="top:218px;"><svg class="a" style="left:3px;top:1px" width="16" height="16" viewBox="0 0 16 16"><path d="M2.500 .5 L10.500 .5 L14 4 L14 14 L2.500 14Z" fill="url(#pg)"/><path d="M10.500 .5 L10.500 4 L14 4Z" fill="#5cb2ee"/><path d="M10.500 .5 L10.500 4 L14 4" fill="none" stroke="#d8ecfa" stroke-width=".6"/><text x=".2" y="10.600" font-family="Liberation Sans, DejaVu Sans, sans-serif" font-weight="bold" font-size="7.400" letter-spacing="-0.6" fill="#000">mp3</text></svg><span style="left:21px">30 Seconds To Mars - 05 - Buddha for Mary.…</span><span style="right:289px">13837125</span><span style="left:335px">30 Seconds To Mars</span><span style="left:484.500px"><span style="letter-spacing:-0.12px">Buddha for Mary</span></span></div>
<div class="row" style="top:235px;background:linear-gradient(#e2ecfa,#cbdcf4);box-shadow:inset 0 0 0 1px #aecbee;outline:1px dotted #1a1a1a;outline-offset:-2px;"><svg class="a" style="left:3px;top:1px" width="16" height="16" viewBox="0 0 16 16"><path d="M2.500 .5 L10.500 .5 L14 4 L14 14 L2.500 14Z" fill="url(#pg)"/><path d="M10.500 .5 L10.500 4 L14 4Z" fill="#5cb2ee"/><path d="M10.500 .5 L10.500 4 L14 4" fill="none" stroke="#d8ecfa" stroke-width=".6"/><text x=".2" y="10.600" font-family="Liberation Sans, DejaVu Sans, sans-serif" font-weight="bold" font-size="7.400" letter-spacing="-0.6" fill="#000">mp3</text></svg><span style="left:21px">30 Seconds To Mars - 06 - Echelon.mp3</span><span style="right:289px">14021027</span><span style="left:335px">30 Seconds To Mars</span><span style="left:484.500px"><span style="letter-spacing:-0.45px">Echelon</span></span></div>
<div class="row" style="top:252px;"><svg class="a" style="left:3px;top:1px" width="16" height="16" viewBox="0 0 16 16"><path d="M2.500 .5 L10.500 .5 L14 4 L14 14 L2.500 14Z" fill="url(#pg)"/><path d="M10.500 .5 L10.500 4 L14 4Z" fill="#5cb2ee"/><path d="M10.500 .5 L10.500 4 L14 4" fill="none" stroke="#d8ecfa" stroke-width=".6"/><text x=".2" y="10.600" font-family="Liberation Sans, DejaVu Sans, sans-serif" font-weight="bold" font-size="7.400" letter-spacing="-0.6" fill="#000">mp3</text></svg><span style="left:21px">30 Seconds To Mars - 07 - Welcome to the …</span><span style="right:289px">6430888</span><span style="left:335px">30 Seconds To Mars</span><span style="left:484.500px"><span style="letter-spacing:-0.13px">Welcome to the Universe</span></span></div>
<div class="row" style="top:269px;"><svg class="a" style="left:3px;top:1px" width="16" height="16" viewBox="0 0 16 16"><path d="M2.500 .5 L10.500 .5 L14 4 L14 14 L2.500 14Z" fill="url(#pg)"/><path d="M10.500 .5 L10.500 4 L14 4Z" fill="#5cb2ee"/><path d="M10.500 .5 L10.500 4 L14 4" fill="none" stroke="#d8ecfa" stroke-width=".6"/><text x=".2" y="10.600" font-family="Liberation Sans, DejaVu Sans, sans-serif" font-weight="bold" font-size="7.400" letter-spacing="-0.6" fill="#000">mp3</text></svg><span style="left:21px">30 Seconds To Mars - 08 - The Mission.mp3</span><span style="right:289px">9829942</span><span style="left:335px">30 Seconds To Mars</span><span style="left:484.500px"><span style="letter-spacing:-0.43px">The Mission</span></span></div>
<div class="row" style="top:286px;"><svg class="a" style="left:3px;top:1px" width="16" height="16" viewBox="0 0 16 16"><path d="M2.500 .5 L10.500 .5 L14 4 L14 14 L2.500 14Z" fill="url(#pg)"/><path d="M10.500 .5 L10.500 4 L14 4Z" fill="#5cb2ee"/><path d="M10.500 .5 L10.500 4 L14 4" fill="none" stroke="#d8ecfa" stroke-width=".6"/><text x=".2" y="10.600" font-family="Liberation Sans, DejaVu Sans, sans-serif" font-weight="bold" font-size="7.400" letter-spacing="-0.6" fill="#000">mp3</text></svg><span style="left:21px">30 Seconds To Mars - 09 - End of the Begin…</span><span style="right:289px">11213386</span><span style="left:335px">30 Seconds To Mars</span><span style="left:484.500px"><span style="letter-spacing:-0.16px">End of the Beginning</span></span></div>
<div class="row" style="top:303px;"><svg class="a" style="left:3px;top:1px" width="16" height="16" viewBox="0 0 16 16"><path d="M2.500 .5 L10.500 .5 L14 4 L14 14 L2.500 14Z" fill="url(#pg)"/><path d="M10.500 .5 L10.500 4 L14 4Z" fill="#5cb2ee"/><path d="M10.500 .5 L10.500 4 L14 4" fill="none" stroke="#d8ecfa" stroke-width=".6"/><text x=".2" y="10.600" font-family="Liberation Sans, DejaVu Sans, sans-serif" font-weight="bold" font-size="7.400" letter-spacing="-0.6" fill="#000">mp3</text></svg><span style="left:21px">30 Seconds To Mars - 10 - 93 Million Miles.mp3</span><span style="right:289px">12832978</span><span style="left:335px">30 Seconds To Mars</span><span style="left:484.500px"><span style="letter-spacing:-0.4px">93 Million Miles</span></span></div>
<div class="row" style="top:320px;"><svg class="a" style="left:3px;top:1px" width="16" height="16" viewBox="0 0 16 16"><path d="M2.500 .5 L10.500 .5 L14 4 L14 14 L2.500 14Z" fill="url(#pg)"/><path d="M10.500 .5 L10.500 4 L14 4Z" fill="#5cb2ee"/><path d="M10.500 .5 L10.500 4 L14 4" fill="none" stroke="#d8ecfa" stroke-width=".6"/><text x=".2" y="10.600" font-family="Liberation Sans, DejaVu Sans, sans-serif" font-weight="bold" font-size="7.400" letter-spacing="-0.6" fill="#000">mp3</text></svg><span style="left:21px">30 Seconds To Mars - 11 - Year Zero.mp3</span><span style="right:289px">18924733</span><span style="left:335px">30 Seconds To Mars</span><span style="left:484.500px"><span style="letter-spacing:-0.16px">Year Zero</span></span></div>
<div class="a" style="left:252px;top:342px;width:611px;height:17px;background:#050505"></div>
<div class="a" style="left:269px;top:343px;width:577px;height:15px;background:linear-gradient(#1b1b1b,#2b2b2b);border-top:1px solid #5a5a5a"></div>
<div class="a" style="left:253px;top:343px;width:15px;height:15px;background:linear-gradient(#3d3d3d 0,#323232 50%,#242424 50%,#2a2a2a 100%);border-top:1px solid #7c7c7c;border-left:1px solid #7c7c7c;box-shadow:0 0 0 1px #050505"><svg class="a" style="left:-1px;top:-1px" width="15" height="15" viewBox="0 0 15 15"><path d="M9.500 2.500 L4.500 7.500 L9.500 12.500Z" fill="url(#agh)"/></svg></div>
<div class="a" style="left:847px;top:343px;width:15px;height:15px;background:linear-gradient(#3d3d3d 0,#323232 50%,#242424 50%,#2a2a2a 100%);border-top:1px solid #7c7c7c;border-left:1px solid #7c7c7c;box-shadow:0 0 0 1px #050505"><svg class="a" style="left:-1px;top:-1px" width="15" height="15" viewBox="0 0 15 15"><path d="M5.500 2.500 L10.500 7.500 L5.500 12.500Z" fill="url(#agh)"/></svg></div>
<div class="a" style="left:270px;top:343px;width:136px;height:15px;background:linear-gradient(#424242 0,#343434 50%,#282828 50%,#2c2c2c 100%);border-top:1px solid #7c7c7c;border-left:1px solid #7c7c7c;box-shadow:0 0 0 1px #050505"></div>
<div class="a" style="left:334px;top:347px;width:8px;height:7px;background:repeating-linear-gradient(90deg,#c8c8c8 0,#c8c8c8 1px,transparent 1px,transparent 2px)"></div>
<div class="a" style="left:252px;top:361px;width:612px;height:266px;background:#292929;border:1px solid #0c0c0c;border-top-color:#2c2c2c;border-left-color:#505050;border-radius:0 0 6px 6px"></div>
<div class="tt" style="left:313px;width:55px"><span style="letter-spacing:0.04px">Extended</span></div>
<div class="tt" style="left:370px;width:41px"><span style="letter-spacing:-0.22px">Lyrics</span></div>
<div class="tt" style="left:413px;width:57px"><span style="letter-spacing:0.15px">Cover Art</span></div>
<div class="tt" style="left:472px;width:45px"><span style="letter-spacing:-0.35px">Frames</span></div>
<div class="tt" style="left:518px;width:60px"><span style="letter-spacing:-0.09px">Properties</span></div>
<div class="a" style="left:261px;top:396px;width:595px;height:221px;border-radius:0 0 4px 4px;border:1px solid #a29f9c;border-right-color:#9a9794;border-bottom-color:#8e8b88;background:radial-gradient(ellipse 75px 55px at 560px 55px,rgba(0,0,0,.09),rgba(0,0,0,0) 100%),radial-gradient(ellipse 130px 60px at 0px 190px,rgba(0,0,0,.2),rgba(0,0,0,.12) 50%,rgba(0,0,0,0) 100%),radial-gradient(ellipse 60px 6px at 525px 212px,rgba(0,0,0,.2),rgba(0,0,0,0) 100%),radial-gradient(ellipse 300px 14px at 250px 216px,rgba(0,0,0,.09),rgba(0,0,0,0) 100%),radial-gradient(ellipse 60px 14px at 555px 196px,rgba(255,255,255,.07),rgba(255,255,255,0) 100%),radial-gradient(ellipse 100px 16px at 540px 128px,rgba(255,255,255,.06),rgba(255,255,255,0) 100%),radial-gradient(ellipse 160px 8px at 70px 4px,rgba(0,0,0,.13),rgba(0,0,0,0) 100%),linear-gradient(90deg,#827f7a 0,#827f7b 60%,#7b7874 100%)"></div>
<div class="tt" style="left:261px;top:372px;width:51px;height:27px;background:linear-gradient(#8c8986,#827f7b);border-color:#a8a5a2;border-right-color:#6c6a67;color:#fff;line-height:20px;border-radius:5px 5px 0 0;z-index:2;box-shadow:1px -1px 0 #111,-1px -1px 0 #111"><span style="letter-spacing:-0.31px">General</span></div>
<div class="lbl" style="left:273px;top:414px"><span style="letter-spacing:-0.33px">Track Number</span></div>
<div class="lbl" style="left:273px;top:438px"><span style="letter-spacing:-0.24px">Title</span></div>
<div class="lbl" style="left:273px;top:462px"><span style="letter-spacing:0.06px">Artist</span></div>
<div class="lbl" style="left:273px;top:486px">Album</div>
<div class="lbl" style="left:273px;top:510px">Year</div>
<div class="lbl" style="left:273px;top:534px"><span style="letter-spacing:-0.38px">Comment</span></div>
<div class="fld" style="left:359px;top:409px;width:75px;height:21px">06<svg class="a" style="right:3px;top:3px" width="15" height="12" viewBox="0 0 15 12"><defs><linearGradient id="ar" x1="0" y1="0" x2="0" y2="1"><stop offset="0" stop-color="#5a5a5a"/><stop offset="1" stop-color="#b8b8b8"/></linearGradient></defs><path d="M4.500 .5 L10.500 .5 L10.500 4.500 L14 4.500 L7.500 11 L1 4.500 L4.500 4.500Z" fill="url(#ar)" stroke="#1c1c1c" stroke-width="1"/></svg></div>
<div class="fld" style="left:449px;top:409px;width:75px;height:21px">11<svg class="a" style="right:3px;top:3px" width="15" height="12" viewBox="0 0 15 12"><defs><linearGradient id="ar" x1="0" y1="0" x2="0" y2="1"><stop offset="0" stop-color="#5a5a5a"/><stop offset="1" stop-color="#b8b8b8"/></linearGradient></defs><path d="M4.500 .5 L10.500 .5 L10.500 4.500 L14 4.500 L7.500 11 L1 4.500 L4.500 4.500Z" fill="url(#ar)" stroke="#1c1c1c" stroke-width="1"/></svg></div>
<div class="fld" style="left:644px;top:409px;width:50px;height:21px"></div>
<div class="fld" style="left:709px;top:409px;width:50px;height:21px"></div>
<div class="fld" style="left:359px;top:433px;width:400px;height:21px"><span style="letter-spacing:-0.45px">Echelon</span></div>
<div class="fld" style="left:359px;top:457px;width:400px;height:21px">30 Seconds To Mars</div>
<div class="fld" style="left:359px;top:481px;width:400px;height:21px">30 Seconds To Mars</div>
<div class="fld" style="left:359px;top:505px;width:80px;height:21px">2002</div>
<div class="fld" style="left:509px;top:505px;width:50px;height:21px"></div>
<div class="fld" style="left:639px;top:505px;width:120px;height:21px">Alternative<svg class="a" style="right:3px;top:3px" width="15" height="12" viewBox="0 0 15 12"><defs><linearGradient id="ar" x1="0" y1="0" x2="0" y2="1"><stop offset="0" stop-color="#5a5a5a"/><stop offset="1" stop-color="#b8b8b8"/></linearGradient></defs><path d="M4.500 .5 L10.500 .5 L10.500 4.500 L14 4.500 L7.500 11 L1 4.500 L4.500 4.500Z" fill="url(#ar)" stroke="#1c1c1c" stroke-width="1"/></svg></div>
<div class="fld" style="left:359px;top:529px;width:400px;height:75px"></div>
<div class="lbl" style="left:439px;top:413px;font-size:13px;line-height:15px">/</div>
<div class="lbl" style="left:699px;top:413px;font-size:13px;line-height:15px">/</div>
<div class="lbl" style="left:558px;top:414px"><span style="letter-spacing:-0.45px">Disk Number</span></div>
<div class="lbl" style="left:473px;top:510px">BPM</div>
<div class="lbl" style="left:593px;top:510px">Genre</div>
<div class="cb" style="left:531px;top:412px"></div>
<div class="cb" style="left:766px;top:412px"></div>
<div class="cb" style="left:766px;top:436px"></div>
<div class="cb" style="left:766px;top:460px"></div>
<div class="cb" style="left:766px;top:484px"></div>
<div class="cb" style="left:446px;top:508px"></div>
<div class="cb" style="left:566px;top:508px"></div>
<div class="cb" style="left:766px;top:508px"></div>
<div class="cb" style="left:766px;top:532px"></div>
<div class="a" style="left:740px;top:531px;width:17px;height:71px;background:linear-gradient(90deg,#6a6a6a,#777 50%,#666);border:1px solid #555"></div>
<div class="a" style="left:741px;top:531px;width:16px;height:16px;background:linear-gradient(#7a7a7a,#666);border:1px solid #8a8a8a"><svg width="14" height="14" viewBox="0 0 14 14"><path d="M2.500 9 L7 4.500 L11.500 9Z" fill="#d0d0d0"/></svg></div>
<div class="a" style="left:741px;top:586px;width:16px;height:16px;background:linear-gradient(#7a7a7a,#666);border:1px solid #8a8a8a"><svg width="14" height="14" viewBox="0 0 14 14"><path d="M2.500 5 L7 9.500 L11.500 5Z" fill="#d0d0d0"/></svg></div>
<div class="a" style="left:787px;top:529px;width:20px;height:17px;"><svg class="a" style="left:0;top:0" width="20" height="17" viewBox="0 0 20 17"><rect x=".5" y=".5" width="9" height="16" fill="#74716d" stroke="#5e5b58"/><rect x="10.500" y=".5" width="9" height="16" fill="#74716d" stroke="#5e5b58"/><path d="M7.500 3.500 L2.500 8.500 L7.500 13.500Z" fill="#a29f9c"/><path d="M12.500 3.500 L17.500 8.500 L12.500 13.500Z" fill="#a29f9c"/></svg></div>
<div class="a" style="left:769px;top:554px;width:75px;height:25px;background:linear-gradient(#3c3c3c 0,#2e2e2e 48%,#1c1c1c 52%,#222 100%);border:1px solid #0c0c0c;box-shadow:inset 0 1px 0 #666;color:#fff;text-align:center;line-height:24px;padding-right:2px">Edit</div>
<div class="a" style="left:4px;top:627px;width:860px;height:26px;background:linear-gradient(#787878 0,#787878 1px,#343434 1px,#2a2a2a 9px,#1f1f1f 13px,#1e1e1e 25px,#444 25px,#444 26px)"></div>
<div class="sb" style="left:8px"><span style="letter-spacing:0.07px">Total files: 11</span></div>
<div class="sb" style="left:147px"><span style="letter-spacing:-0.1px">Selected files: 1</span></div>
<div class="sb" style="left:287px"><span style="letter-spacing:0.09px">Total time: 53:11</span></div>
<div class="sb" style="left:427px"><span style="letter-spacing:-0.06px">Selected time: 05:50</span></div>
<div class="sb" style="left:567px"><span style="letter-spacing:-0.36px">122,04 MB</span></div>
<div class="sb" style="left:668px"><span style="letter-spacing:-0.45px">13,37 MB</span></div>
<div class="sd" style="left:141px"></div>
<div class="sd" style="left:281px"></div>
<div class="sd" style="left:421px"></div>
<div class="sd" style="left:561px"></div>
<div class="sd" style="left:661px"></div>
<svg class="a" style="left:851px;top:635px" width="12" height="12" viewBox="0 0 12 12"><g fill="#dcdcdc"><rect x="8" y="1" width="1.600" height="1.600"/><rect x="4" y="5.200" width="1.600" height="1.600"/><rect x="8" y="9.400" width="1.600" height="1.600"/><rect x="0" y="9.400" width="1.600" height="1.600"/></g></svg>
</div></div>
</body></html>
